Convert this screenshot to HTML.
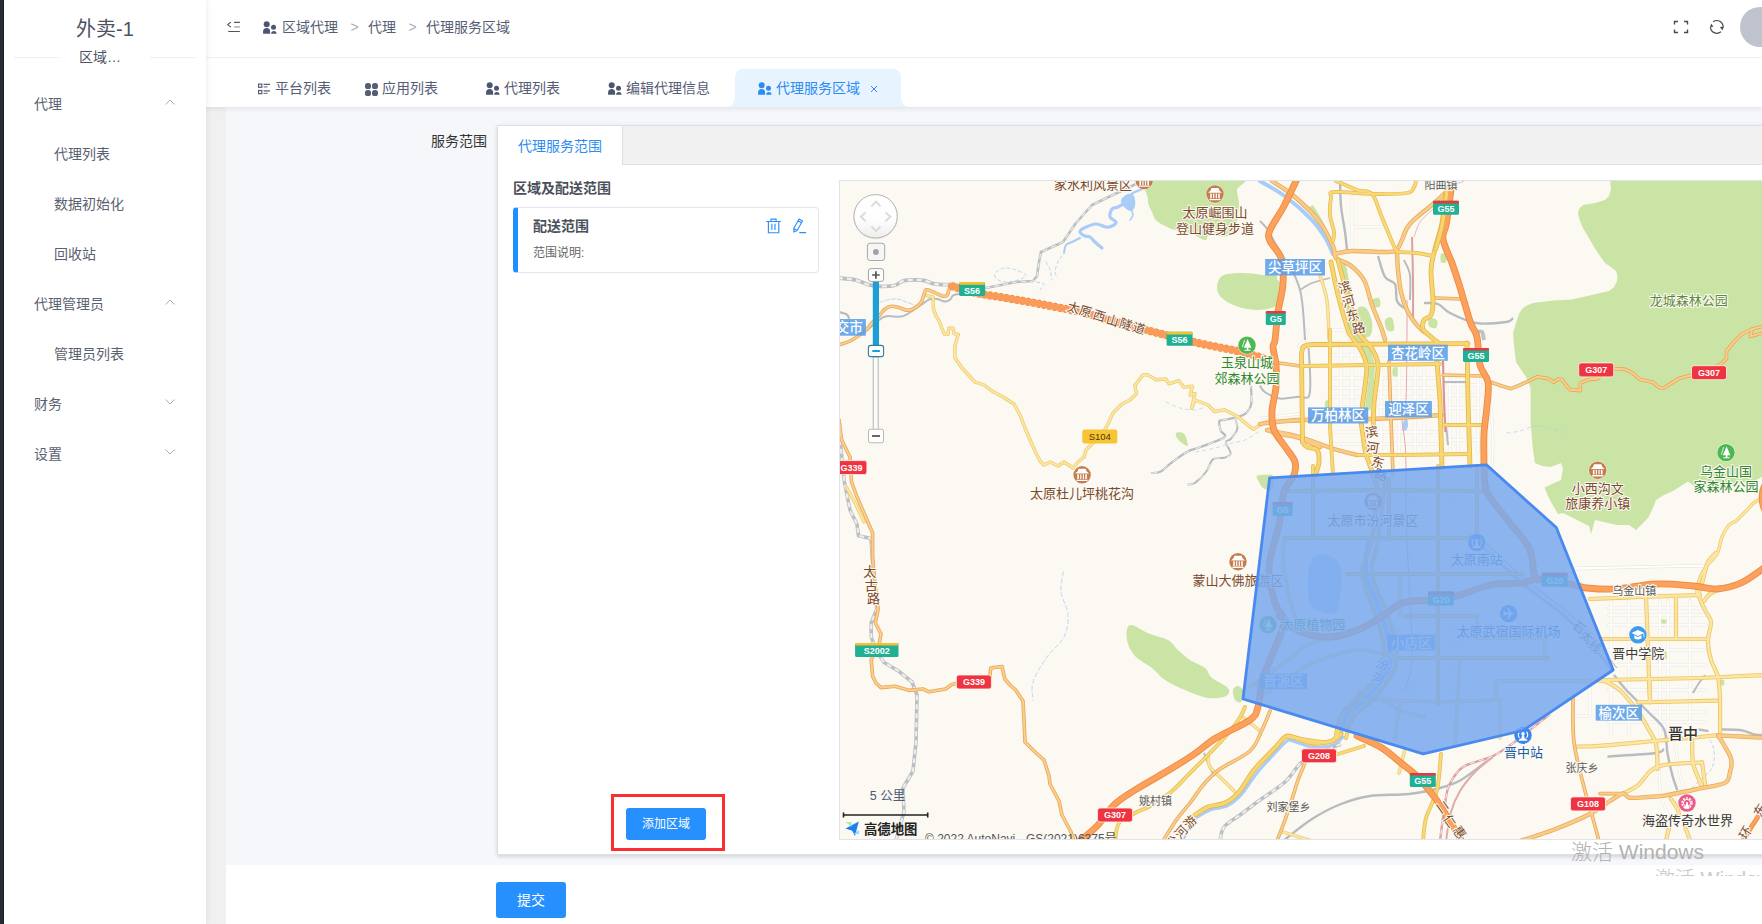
<!DOCTYPE html>
<html lang="zh-CN">
<head>
<meta charset="utf-8">
<title>代理服务区域</title>
<style>
*{box-sizing:border-box;margin:0;padding:0}
html,body{width:1762px;height:924px;overflow:hidden;background:#f5f7fa}
body{position:relative;font-family:"Liberation Sans","Noto Sans CJK SC",sans-serif;font-size:14px;color:#5a6070;-webkit-font-smoothing:antialiased}
.abs{position:absolute}
.t{position:absolute;white-space:nowrap;line-height:20px;height:20px}
#strip{left:0;top:0;width:4px;height:924px;background:linear-gradient(to right,#282c35 0,#282c35 2.7px,#1b1f28 3.5px,#1b1f28 4px)}
#side{left:4px;top:0;width:202px;height:924px;background:#fff;box-shadow:1px 0 6px rgba(0,21,41,.08);z-index:5}
#head{left:206px;top:0;width:1556px;height:58px;background:#fff;border-bottom:1px solid #f0f0f2;z-index:4}
#tabs{left:206px;top:58px;width:1556px;height:49px;background:#fff;box-shadow:0 2px 5px rgba(0,21,41,.08);z-index:3}
#gstrip{left:206px;top:107px;width:20px;height:817px;background:#f0f0f0}
#foot{left:226px;top:865px;width:1536px;height:59px;background:#fff}
#panel{left:497px;top:125px;width:1300px;height:730px;background:#fff;border:1px solid #dcdfe6;box-shadow:0 2px 4px 0 rgba(0,0,0,.12),0 0 6px 0 rgba(0,0,0,.04)}
#phead{left:0;top:0;width:1298px;height:39px;background:#f1f1f1;border-bottom:1px solid #e0e3ea}
#ptab{left:-1px;top:0;width:126px;height:39px;background:#fff;border-right:1px solid #dcdfe6;border-left:1px solid #dcdfe6}
.mi{color:#5b6171}
.btn{position:absolute;background:#2691fe;color:#fff;border-radius:3px;text-align:center}
</style>
</head>
<body>
<div id="strip" class="abs"></div>

<!-- SIDEBAR -->
<div id="side" class="abs">
  <div class="t" style="left:0;width:202px;top:15px;height:28px;line-height:28px;font-size:20px;text-align:center;color:#4c5262">外卖-1</div>
  <div class="abs" style="left:10px;top:57px;width:45px;height:1px;background:#f0f0f2"></div>
  <div class="abs" style="left:146px;top:57px;width:46px;height:1px;background:#f0f0f2"></div>
  <div class="t" style="left:0;width:192px;top:47px;text-align:center;color:#4c5262">区域…</div>

  <div class="t mi" style="left:30px;top:94px">代理</div>
  <svg class="abs" style="left:160px;top:98px" width="12" height="8" viewBox="0 0 12 8"><path d="M1.5 6.5 L6 2 L10.5 6.5" fill="none" stroke="#a9adb6" stroke-width="1"/></svg>
  <div class="t mi" style="left:50px;top:144px">代理列表</div>
  <div class="t mi" style="left:50px;top:194px">数据初始化</div>
  <div class="t mi" style="left:50px;top:244px">回收站</div>
  <div class="t mi" style="left:30px;top:294px">代理管理员</div>
  <svg class="abs" style="left:160px;top:298px" width="12" height="8" viewBox="0 0 12 8"><path d="M1.5 6.5 L6 2 L10.5 6.5" fill="none" stroke="#a9adb6" stroke-width="1"/></svg>
  <div class="t mi" style="left:50px;top:344px">管理员列表</div>
  <div class="t mi" style="left:30px;top:394px">财务</div>
  <svg class="abs" style="left:160px;top:398px" width="12" height="8" viewBox="0 0 12 8"><path d="M1.5 1.5 L6 6 L10.5 1.5" fill="none" stroke="#a9adb6" stroke-width="1"/></svg>
  <div class="t mi" style="left:30px;top:444px">设置</div>
  <svg class="abs" style="left:160px;top:448px" width="12" height="8" viewBox="0 0 12 8"><path d="M1.5 1.5 L6 6 L10.5 1.5" fill="none" stroke="#a9adb6" stroke-width="1"/></svg>
</div>

<!-- HEADER -->
<div id="head" class="abs">
  <svg class="abs" style="left:21px;top:20px" width="14" height="14" viewBox="0 0 14 14"><path d="M3.9 2.1 L0.7 4.6 L3.9 7.1 M7.1 2.3 H12.9 M1.2 11.5 H12.9" fill="none" stroke="#555" stroke-width="1.2"/><path d="M7.1 6.9 H12.9" fill="none" stroke="#aaa" stroke-width="1.4"/></svg>
  <svg class="abs usr" style="left:56px;top:20px" width="15" height="14" viewBox="0 0 15 14"><g fill="#4d5670"><circle cx="4.7" cy="4.25" r="3"/><path d="M1.1 13.7 V11.4 Q1.1 7.9 4.6 7.9 Q8.1 7.9 8.1 11.4 V13.7 Z"/><circle cx="11.5" cy="7.3" r="2.5"/><path d="M9.1 13.7 Q9.3 11.1 11.85 11.1 Q14.4 11.1 14.6 13.7 Z"/></g></svg>
  <div class="t" style="left:76px;top:17px;color:#555e73">区域代理</div>
  <div class="t" style="left:144.5px;top:17px;color:#a9aebb">&gt;</div>
  <div class="t" style="left:162px;top:17px;color:#555e73">代理</div>
  <div class="t" style="left:202.5px;top:17px;color:#a9aebb">&gt;</div>
  <div class="t" style="left:220px;top:17px;color:#555e73">代理服务区域</div>

  <svg class="abs" style="left:1467px;top:20px" width="16" height="14" viewBox="0 0 16 14"><path d="M1.5 4.5 V1.5 H5 M11 1.5 H14.5 V4.5 M14.5 9.5 V12.5 H11 M5 12.5 H1.5 V9.5" fill="none" stroke="#4a4a4a" stroke-width="1.4"/></svg>
  <svg class="abs" style="left:1503px;top:19px" width="16" height="16" viewBox="0 0 16 16"><path d="M4.2 2.7 A6.3 6.3 0 0 1 14.1 8 M11.9 12.7 A6.3 6.3 0 0 1 1.5 7.9" fill="none" stroke="#4a4a4a" stroke-width="1.2"/><path d="M10.8 8 L14.9 7.7 L13.5 11.2 Z M2.3 4.4 L1 7.9 L4.4 7.8 Z" fill="#4a4a4a"/></svg>
  <div class="abs" style="left:1534px;top:7px;width:40px;height:40px;border-radius:50%;background:#bfc3cd"></div>
</div>

<!-- TABS -->
<div id="tabs" class="abs">
  <svg class="abs" style="left:521px;top:11px" width="182" height="38" viewBox="0 0 182 38"><path d="M0 38 Q7 37.5 8 29 V9 Q8 0 17 0 H165 Q174 0 174 9 V29 Q175 37.5 182 38 Z" fill="#e7f3ff"/></svg>
  <svg class="abs" style="left:52px;top:24px" width="13" height="14" viewBox="0 0 13 14"><g fill="none" stroke="#555e73" stroke-width="1.2"><rect x="0.6" y="2.1" width="3.2" height="3.2"/><rect x="0.6" y="8.5" width="3.2" height="3.2"/><path d="M5.6 2.4 H12 M5.6 8.8 H12"/><path d="M5.6 4.9 H9.6 M5.6 11.3 H9.6" stroke="#7d8496"/></g></svg>
  <div class="t" style="left:69px;top:20px;color:#555e73">平台列表</div>
  <svg class="abs" style="left:158.6px;top:24.8px" width="13" height="13" viewBox="0 0 13 13"><g fill="#555e73"><rect x="0" y="0" width="6" height="6" rx="2.6"/><rect x="7" y="0" width="6" height="6" rx="2.6"/><rect x="0" y="7" width="6" height="6" rx="2.6"/><rect x="7" y="7" width="6" height="6" rx="2.6"/></g></svg>
  <div class="t" style="left:176px;top:20px;color:#555e73">应用列表</div>
  <svg class="abs usr" style="left:279px;top:23px" width="15" height="14" viewBox="0 0 15 14"><g fill="#4d5670"><circle cx="4.7" cy="4.25" r="3"/><path d="M1.1 13.7 V11.4 Q1.1 7.9 4.6 7.9 Q8.1 7.9 8.1 11.4 V13.7 Z"/><circle cx="11.5" cy="7.3" r="2.5"/><path d="M9.1 13.7 Q9.3 11.1 11.85 11.1 Q14.4 11.1 14.6 13.7 Z"/></g></svg>
  <div class="t" style="left:298px;top:20px;color:#555e73">代理列表</div>
  <svg class="abs usr" style="left:401px;top:23px" width="15" height="14" viewBox="0 0 15 14"><g fill="#4d5670"><circle cx="4.7" cy="4.25" r="3"/><path d="M1.1 13.7 V11.4 Q1.1 7.9 4.6 7.9 Q8.1 7.9 8.1 11.4 V13.7 Z"/><circle cx="11.5" cy="7.3" r="2.5"/><path d="M9.1 13.7 Q9.3 11.1 11.85 11.1 Q14.4 11.1 14.6 13.7 Z"/></g></svg>
  <div class="t" style="left:420px;top:20px;color:#555e73">编辑代理信息</div>
  <svg class="abs usr" style="left:551px;top:23px" width="15" height="14" viewBox="0 0 15 14"><g fill="#2d8cf0"><circle cx="4.7" cy="4.25" r="3"/><path d="M1.1 13.7 V11.4 Q1.1 7.9 4.6 7.9 Q8.1 7.9 8.1 11.4 V13.7 Z"/><circle cx="11.5" cy="7.3" r="2.5"/><path d="M9.1 13.7 Q9.3 11.1 11.85 11.1 Q14.4 11.1 14.6 13.7 Z"/></g></svg>
  <div class="t" style="left:570px;top:20px;color:#2d8cf0">代理服务区域</div>
  <svg class="abs" style="left:664px;top:27px" width="8" height="8" viewBox="0 0 8 8"><path d="M1 1 L7 7 M7 1 L1 7" stroke="#2d8cf0" stroke-width="1" fill="none"/></svg>
</div>

<div id="gstrip" class="abs"></div>
<div id="foot" class="abs"></div>

<!-- FORM -->
<div class="t" style="left:431px;top:131px;color:#333">服务范围</div>
<div id="panel" class="abs">
  <div id="phead" class="abs"><div id="ptab" class="abs"></div></div>
  <div class="t" style="left:20px;top:10px;color:#2d8cf0">代理服务范围</div>
  <div class="t" style="left:15px;top:52px;color:#4a4f59;font-weight:bold">区域及配送范围</div>
  <div class="abs" style="left:15px;top:81px;width:306px;height:66px;border:1px solid #e4e7ed;border-left:5px solid #1e8fff;border-radius:4px;background:#fff"></div>
  <div class="t" style="left:35px;top:90px;color:#4a4f59;font-weight:bold">配送范围</div>
  <div class="t" style="left:35px;top:117px;font-size:12px;color:#666">范围说明:</div>
  <svg class="abs" style="left:268px;top:92px" width="15" height="16" viewBox="0 0 15 16"><path d="M0.2 3.5 H14.9 M5 3.5 V1.1 H10.1 V3.5 M2.4 3.5 V14.7 H12.8 V3.5" fill="none" stroke="#2a90fc" stroke-width="1.15"/><path d="M5 5.8 h1.7 v6.2 h-1.7 z M8 5.8 h1.8 v6.2 h-1.8 z" fill="#74b6ff"/></svg>
  <svg class="abs" style="left:294px;top:92px" width="15" height="16" viewBox="0 0 15 16"><path d="M7.1 1 L10.5 3 L5.1 12.4 L1.9 14 L1.7 10.4 Z M6.1 2.7 L9.5 4.7 M1.7 10.4 L5.1 12.4 M7.3 14.6 H14.1" fill="none" stroke="#2a90fc" stroke-width="1.1" stroke-linejoin="round"/></svg>
  <div class="abs" style="left:113px;top:668px;width:114px;height:57px;border:3px solid #fa3030"></div>
  <div class="btn" style="left:128px;top:682px;width:80px;height:32px;line-height:32px;font-size:12px">添加区域</div>
  <!-- MAP -->
  <div id="map" class="abs" style="left:341px;top:54px;width:930px;height:660px;overflow:hidden;border:1px solid #dfe3ea;background:#fcf9f2">
  <!--MAPSVG-->
<svg width="930" height="658" viewBox="840 181 930 658" style="position:absolute;left:0;top:0;font-family:'Liberation Sans','Noto Sans CJK SC',sans-serif">
<rect x="840" y="181" width="930" height="658" fill="#fcf9f2"/>
<g><path d="M1610.0 178.0 L1611.0 189.0 L1609.0 196.0 L1605.0 200.0 L1595.0 203.0 L1583.0 205.0 L1579.0 209.0 L1578.0 214.0 L1580.0 221.0 L1583.0 228.0 L1590.0 240.0 L1596.0 250.0 L1600.0 256.0 L1605.0 263.0 L1611.0 267.0 L1616.0 271.0 L1617.5 276.0 L1617.0 281.0 L1614.0 287.0 L1609.0 291.0 L1596.0 294.0 L1583.0 297.0 L1572.0 299.6 L1554.0 300.5 L1533.0 303.0 L1526.0 306.0 L1522.0 309.0 L1519.0 314.0 L1517.0 320.0 L1513.0 333.0 L1514.0 346.0 L1516.0 362.0 L1526.0 377.0 L1530.6 388.0 L1530.6 423.0 L1533.0 450.0 L1535.0 463.0 L1542.0 466.0 L1550.0 467.0 L1556.0 465.0 L1561.0 463.0 L1563.0 469.0 L1561.0 480.0 L1552.0 484.0 L1544.5 487.5 L1548.0 496.0 L1551.0 502.0 L1558.0 514.0 L1563.0 513.0 L1589.0 526.0 L1591.0 534.0 L1595.0 520.0 L1617.0 525.0 L1629.0 525.0 L1636.0 530.0 L1648.0 518.0 L1653.0 508.0 L1656.0 500.0 L1664.0 495.0 L1673.0 491.0 L1688.0 481.6 L1695.0 487.0 L1720.0 487.0 L1756.0 480.0 L1775.0 470.0 L1775.0 178.0 Z" fill="#c9e4a5" stroke="none"/><path d="M1153.0 178.0 C1137.7 181.7 1148.2 194.3 1148.0 200.0 C1147.8 205.7 1150.5 208.5 1152.0 212.0 C1153.5 215.5 1153.7 218.2 1157.0 221.0 C1160.3 223.8 1166.5 227.0 1172.0 229.0 C1177.5 231.0 1185.3 231.5 1190.0 233.0 C1194.7 234.5 1197.3 236.8 1200.0 238.0 C1202.7 239.2 1204.3 240.5 1206.0 240.0 C1207.7 239.5 1206.3 235.7 1210.0 235.0 C1213.7 234.3 1223.7 237.5 1228.0 236.0 C1232.3 234.5 1234.2 231.2 1236.0 226.0 C1237.8 220.8 1238.8 211.0 1239.0 205.0 C1239.2 199.0 1236.8 194.5 1237.0 190.0 C1237.2 185.5 1254.0 180.0 1240.0 178.0 C1226.0 176.0 1168.3 174.3 1153.0 178.0 Z" fill="#c9e4a5" stroke="none"/><path d="M1222.0 276.0 C1218.2 278.5 1217.0 284.3 1217.0 288.0 C1217.0 291.7 1218.8 295.0 1222.0 298.0 C1225.2 301.0 1230.3 304.0 1236.0 306.0 C1241.7 308.0 1249.7 309.8 1256.0 310.0 C1262.3 310.2 1269.5 309.3 1274.0 307.0 C1278.5 304.7 1282.0 300.2 1283.0 296.0 C1284.0 291.8 1283.5 285.5 1280.0 282.0 C1276.5 278.5 1268.7 276.5 1262.0 275.0 C1255.3 273.5 1246.7 272.8 1240.0 273.0 C1233.3 273.2 1225.8 273.5 1222.0 276.0 Z" fill="#c9e4a5" stroke="none"/><path d="M1130.0 625.0 C1126.2 626.0 1126.2 634.8 1127.0 640.0 C1127.8 645.2 1130.8 651.3 1135.0 656.0 C1139.2 660.7 1147.0 664.0 1152.0 668.0 C1157.0 672.0 1159.5 676.3 1165.0 680.0 C1170.5 683.7 1177.8 687.0 1185.0 690.0 C1192.2 693.0 1201.2 697.0 1208.0 698.0 C1214.8 699.0 1222.7 697.7 1226.0 696.0 C1229.3 694.3 1230.3 691.0 1228.0 688.0 C1225.7 685.0 1215.8 681.3 1212.0 678.0 C1208.2 674.7 1208.7 671.0 1205.0 668.0 C1201.3 665.0 1194.5 663.0 1190.0 660.0 C1185.5 657.0 1181.7 653.3 1178.0 650.0 C1174.3 646.7 1172.7 642.7 1168.0 640.0 C1163.3 637.3 1156.3 636.5 1150.0 634.0 C1143.7 631.5 1133.8 624.0 1130.0 625.0 Z" fill="#c9e4a5" stroke="none"/><path d="M1233.0 690.0 C1233.5 687.7 1236.2 685.7 1238.0 686.0 C1239.8 686.3 1243.5 689.3 1244.0 692.0 C1244.5 694.7 1242.5 700.7 1241.0 702.0 C1239.5 703.3 1236.3 702.0 1235.0 700.0 C1233.7 698.0 1232.5 692.3 1233.0 690.0 Z" fill="#c9e4a5" stroke="none"/><path d="M1176.0 433.0 C1176.8 432.1 1180.3 431.9 1182.0 432.6 C1183.7 433.3 1185.1 434.8 1186.0 437.0 C1186.9 439.2 1188.3 445.0 1187.6 446.0 C1186.9 447.0 1183.8 444.3 1182.0 443.0 C1180.2 441.7 1178.0 439.7 1177.0 438.0 C1176.0 436.3 1175.2 433.9 1176.0 433.0 Z" fill="#c9e4a5" stroke="none"/><path d="M1260.0 275.0 L1277.0 275.0 L1278.0 300.0 L1272.0 308.0 L1260.0 308.0 Z" fill="#c9e4a5" stroke="none"/><path d="M1357.0 310.0 C1358.0 305.7 1363.5 306.0 1366.0 308.0 C1368.5 310.0 1371.3 317.3 1372.0 322.0 C1372.7 326.7 1372.0 334.0 1370.0 336.0 C1368.0 338.0 1362.2 338.3 1360.0 334.0 C1357.8 329.7 1356.0 314.3 1357.0 310.0 Z" fill="#c9e4a5" stroke="none"/><path d="M1372.0 300.0 C1372.8 298.5 1377.7 297.0 1379.0 298.0 C1380.3 299.0 1380.8 304.5 1380.0 306.0 C1379.2 307.5 1375.3 308.0 1374.0 307.0 C1372.7 306.0 1371.2 301.5 1372.0 300.0 Z" fill="#c9e4a5" stroke="none"/><path d="M1385.0 320.0 C1385.8 318.0 1390.5 316.3 1392.0 318.0 C1393.5 319.7 1394.8 328.0 1394.0 330.0 C1393.2 332.0 1388.5 331.7 1387.0 330.0 C1385.5 328.3 1384.2 322.0 1385.0 320.0 Z" fill="#c9e4a5" stroke="none"/><path d="M1429.0 318.0 C1430.3 317.0 1435.8 318.3 1437.0 320.0 C1438.2 321.7 1437.3 327.0 1436.0 328.0 C1434.7 329.0 1430.2 327.7 1429.0 326.0 C1427.8 324.3 1427.7 319.0 1429.0 318.0 Z" fill="#c9e4a5" stroke="none"/><path d="M1441.0 254.0 C1441.8 252.7 1445.2 252.7 1446.0 254.0 C1446.8 255.3 1446.8 260.7 1446.0 262.0 C1445.2 263.3 1441.8 263.3 1441.0 262.0 C1440.2 260.7 1440.2 255.3 1441.0 254.0 Z" fill="#c9e4a5" stroke="none"/><path d="M1257.0 476.0 C1258.2 474.8 1263.3 474.8 1266.0 474.8 C1268.7 474.8 1272.0 473.5 1273.0 476.0 C1274.0 478.5 1273.7 488.0 1272.0 490.0 C1270.3 492.0 1265.2 489.3 1263.0 488.0 C1260.8 486.7 1260.0 484.0 1259.0 482.0 C1258.0 480.0 1255.8 477.2 1257.0 476.0 Z" fill="#c9e4a5" stroke="none"/><path d="M1341.0 264.0 L1346.0 264.0 L1358.0 330.0 L1362.0 338.0 L1371.0 351.0 L1375.0 365.0 L1374.0 383.0 L1371.5 403.0 L1370.5 410.0 L1365.0 410.0 L1365.5 403.0 L1368.5 380.0 L1369.0 365.0 L1363.0 351.0 L1353.0 337.0 L1349.0 328.0 Z" fill="#c9e4a5" stroke="none"/><path d="M1393.0 368.0 C1393.8 366.7 1397.2 366.7 1398.0 368.0 C1398.8 369.3 1398.8 374.7 1398.0 376.0 C1397.2 377.3 1393.8 377.3 1393.0 376.0 C1392.2 374.7 1392.2 369.3 1393.0 368.0 Z" fill="#c9e4a5" stroke="none"/><path d="M1325.0 402.0 C1325.7 400.2 1329.0 398.7 1330.0 400.0 C1331.0 401.3 1331.7 408.2 1331.0 410.0 C1330.3 411.8 1327.0 412.3 1326.0 411.0 C1325.0 409.7 1324.3 403.8 1325.0 402.0 Z" fill="#c9e4a5" stroke="none"/><path d="M1660.0 620.0 C1661.0 619.0 1665.0 619.0 1666.0 620.0 C1667.0 621.0 1667.0 625.0 1666.0 626.0 C1665.0 627.0 1661.0 627.0 1660.0 626.0 C1659.0 625.0 1659.0 621.0 1660.0 620.0 Z" fill="#c9e4a5" stroke="none"/><path d="M1664.0 652.0 C1664.7 651.0 1667.3 651.0 1668.0 652.0 C1668.7 653.0 1668.7 657.0 1668.0 658.0 C1667.3 659.0 1664.7 659.0 1664.0 658.0 C1663.3 657.0 1663.3 653.0 1664.0 652.0 Z" fill="#c9e4a5" stroke="none"/><path d="M1720.0 680.0 C1720.7 679.2 1723.3 679.2 1724.0 680.0 C1724.7 680.8 1724.7 684.2 1724.0 685.0 C1723.3 685.8 1720.7 685.8 1720.0 685.0 C1719.3 684.2 1719.3 680.8 1720.0 680.0 Z" fill="#c9e4a5" stroke="none"/><path d="M1309.0 207.0 L1313.0 205.0 L1321.0 218.0 L1330.0 236.0 L1334.0 250.0 L1330.0 252.0 L1324.0 238.0 L1316.0 222.0 Z" fill="#c9e4a5" stroke="none"/></g>
<g fill="none" stroke-linecap="round" stroke-linejoin="round"><path d="M1148.0 186.0 C1146.7 186.7 1142.5 188.8 1140.0 190.0 C1137.5 191.2 1135.2 191.3 1133.0 193.0 C1130.8 194.7 1128.0 198.8 1127.0 200.0" stroke="#a9cdf8" stroke-width="2.4" fill="none"/><path d="M1128.0 194.0 C1130.2 193.3 1132.8 194.0 1134.0 196.0 C1135.2 198.0 1135.5 203.5 1135.0 206.0 C1134.5 208.5 1132.8 210.8 1131.0 211.0 C1129.2 211.2 1125.7 208.8 1124.0 207.0 C1122.3 205.2 1120.3 202.2 1121.0 200.0 C1121.7 197.8 1125.8 194.7 1128.0 194.0 Z" fill="#a9cdf8" stroke="none"/><path d="M1125.0 203.0 C1123.8 203.7 1120.2 206.0 1118.0 207.0 C1115.8 208.0 1113.3 207.3 1112.0 209.0 C1110.7 210.7 1109.3 214.8 1110.0 217.0 C1110.7 219.2 1115.7 220.5 1116.0 222.0 C1116.3 223.5 1113.7 225.2 1112.0 226.0 C1110.3 226.8 1108.7 227.3 1106.0 227.0 C1103.3 226.7 1099.7 223.8 1096.0 224.0 C1092.3 224.2 1086.7 226.7 1084.0 228.0 C1081.3 229.3 1079.8 230.7 1080.0 232.0 C1080.2 233.3 1083.3 235.2 1085.0 236.0 C1086.7 236.8 1088.2 235.8 1090.0 237.0 C1091.8 238.2 1094.0 241.2 1096.0 243.0 C1098.0 244.8 1101.0 247.2 1102.0 248.0" stroke="#a9cdf8" stroke-width="3.2" fill="none"/><path d="M1131.0 209.0 C1131.3 210.0 1133.2 213.2 1133.0 215.0 C1132.8 216.8 1130.5 219.2 1130.0 220.0" stroke="#a9cdf8" stroke-width="1.6" fill="none"/><path d="M1080.0 238.0 C1078.7 238.7 1074.3 240.8 1072.0 242.0 C1069.7 243.2 1067.3 243.2 1066.0 245.0 C1064.7 246.8 1064.3 251.7 1064.0 253.0" stroke="#a9cdf8" stroke-width="2.0" fill="none"/><path d="M1062.0 256.0 C1061.3 257.0 1059.2 259.3 1058.0 262.0 C1056.8 264.7 1055.0 269.3 1055.0 272.0 C1055.0 274.7 1057.5 277.0 1058.0 278.0" stroke="#a9cdf8" stroke-width="0.8" fill="none" stroke-dasharray="3 3"/><path d="M1046.0 262.0 C1046.7 263.3 1049.0 267.0 1050.0 270.0 C1051.0 273.0 1051.7 278.3 1052.0 280.0" stroke="#a9cdf8" stroke-width="0.8" fill="none" stroke-dasharray="3 3"/><path d="M1040.0 290.0 C1040.7 289.0 1044.7 285.3 1044.0 284.0 C1043.3 282.7 1037.3 282.3 1036.0 282.0" stroke="#a9cdf8" stroke-width="0.8" fill="none" stroke-dasharray="3 3"/><path d="M996.0 272.0 C997.3 271.3 1000.7 268.3 1004.0 268.0 C1007.3 267.7 1012.3 268.7 1016.0 270.0 C1019.7 271.3 1027.0 274.0 1026.0 276.0 C1025.0 278.0 1014.7 281.3 1010.0 282.0 C1005.3 282.7 1000.7 281.3 998.0 280.0 C995.3 278.7 994.7 275.0 994.0 274.0" stroke="#a9cdf8" stroke-width="0.8" fill="none" stroke-dasharray="3 3"/><path d="M1260.0 181.0 C1264.3 183.7 1277.3 190.5 1286.0 197.0 C1294.7 203.5 1305.3 213.0 1312.0 220.0 C1318.7 227.0 1322.5 233.3 1326.0 239.0 C1329.5 244.7 1331.8 251.5 1333.0 254.0" stroke="#a9cdf8" stroke-width="4.0" fill="none"/><path d="M879.6 302.4 C881.3 301.9 886.8 299.8 890.0 299.3 C893.2 298.8 895.7 298.8 898.6 299.3 C901.5 299.8 904.7 301.4 907.3 302.4 C909.9 303.3 913.1 304.6 914.2 305.0" stroke="#a9cdf8" stroke-width="0.8" fill="none" stroke-dasharray="4 2"/><path d="M1063.4 572.0 C1063.0 575.3 1060.2 584.9 1061.0 592.0 C1061.8 599.1 1067.5 607.0 1068.0 614.5 C1068.5 622.0 1067.5 629.9 1064.0 637.0 C1060.5 644.1 1052.2 649.5 1047.0 657.0 C1041.8 664.5 1035.3 674.8 1033.0 682.0 C1030.7 689.2 1033.0 697.0 1033.0 700.0" stroke="#a9cdf8" stroke-width="0.8" fill="none" stroke-dasharray="4 3"/><path d="M1507.0 433.0 C1509.2 432.7 1515.3 432.2 1520.0 431.0 C1524.7 429.8 1530.0 426.5 1535.0 426.0 C1540.0 425.5 1544.8 426.8 1550.0 428.0 C1555.2 429.2 1563.3 432.2 1566.0 433.0" stroke="#a9cdf8" stroke-width="0.7" fill="none" stroke-dasharray="3 4"/><path d="M1369.0 541.0 C1368.5 546.5 1363.8 561.5 1366.0 574.0 C1368.2 586.5 1378.2 604.7 1382.0 616.0 C1385.8 627.3 1387.8 633.3 1389.0 642.0 C1390.2 650.7 1392.2 659.3 1389.0 668.0 C1385.8 676.7 1377.0 686.0 1370.0 694.0 C1363.0 702.0 1352.0 709.0 1347.0 716.0 C1342.0 723.0 1341.2 732.7 1340.0 736.0" stroke="#a9cdf8" stroke-width="5.0" fill="none"/><path d="M1343.0 737.0 C1341.3 738.3 1338.2 743.3 1333.0 745.0 C1327.8 746.7 1318.7 747.7 1312.0 747.0 C1305.3 746.3 1297.2 742.0 1293.0 741.0 C1288.8 740.0 1289.8 739.2 1287.0 741.0 C1284.2 742.8 1281.0 746.7 1276.0 752.0 C1271.0 757.3 1262.8 765.8 1257.0 773.0 C1251.2 780.2 1246.0 789.5 1241.0 795.0 C1236.0 800.5 1232.2 803.5 1227.0 806.0 C1221.8 808.5 1215.2 808.0 1210.0 810.0 C1204.8 812.0 1198.3 816.7 1196.0 818.0" stroke="#a9cdf8" stroke-width="3.0" fill="none"/><path d="M1316.0 556.0 C1319.3 554.7 1326.0 554.3 1330.0 556.0 C1334.0 557.7 1338.2 560.3 1340.0 566.0 C1341.8 571.7 1341.7 582.3 1341.0 590.0 C1340.3 597.7 1339.2 608.3 1336.0 612.0 C1332.8 615.7 1326.3 613.3 1322.0 612.0 C1317.7 610.7 1312.3 609.3 1310.0 604.0 C1307.7 598.7 1308.0 586.7 1308.0 580.0 C1308.0 573.3 1308.7 568.0 1310.0 564.0 C1311.3 560.0 1312.7 557.3 1316.0 556.0 Z" fill="#b6d5fa" stroke="none"/><path d="M1196.0 822.0 C1194.7 823.3 1190.0 827.2 1188.0 830.0 C1186.0 832.8 1184.7 837.5 1184.0 839.0" stroke="#a9cdf8" stroke-width="2.0" fill="none"/><path d="M1707.0 735.0 C1708.2 737.5 1713.2 744.5 1714.0 750.0 C1714.8 755.5 1714.3 763.0 1712.0 768.0 C1709.7 773.0 1703.7 776.3 1700.0 780.0 C1696.3 783.7 1691.7 788.3 1690.0 790.0" stroke="#a9cdf8" stroke-width="0.8" fill="none" stroke-dasharray="3 3"/><path d="M1404.0 420.0 C1404.8 418.2 1406.3 418.0 1407.0 419.0 C1407.7 420.0 1408.3 423.8 1408.0 426.0 C1407.7 428.2 1406.0 431.3 1405.0 432.0 C1404.0 432.7 1402.2 432.0 1402.0 430.0 C1401.8 428.0 1403.2 421.8 1404.0 420.0 Z" fill="#a9cdf8" stroke="none"/><path d="M1166.0 402.0 C1168.3 403.0 1175.2 406.7 1180.0 408.0 C1184.8 409.3 1190.8 410.2 1195.0 410.0 C1199.2 409.8 1203.3 407.5 1205.0 407.0" stroke="#a9cdf8" stroke-width="0.7" fill="none" stroke-dasharray="3 4"/><path d="M1196.0 452.0 C1199.2 451.3 1209.0 449.5 1215.0 448.0 C1221.0 446.5 1227.0 444.3 1232.0 443.0 C1237.0 441.7 1240.7 441.8 1245.0 440.0 C1249.3 438.2 1255.8 433.3 1258.0 432.0" stroke="#a9cdf8" stroke-width="0.7" fill="none" stroke-dasharray="3 4"/></g>
<g fill="none" stroke-linecap="round" stroke-linejoin="round"><path d="M1333.0 355.0 L1362.0 355.0" stroke="#ebe8e1" stroke-width="2.8"/><path d="M1378.0 355.0 L1437.0 355.0" stroke="#ebe8e1" stroke-width="2.8"/><path d="M1333.0 378.0 L1362.0 378.0" stroke="#ebe8e1" stroke-width="2.8"/><path d="M1378.0 378.0 L1437.0 378.0" stroke="#ebe8e1" stroke-width="2.8"/><path d="M1333.0 388.0 L1362.0 388.0" stroke="#ebe8e1" stroke-width="2.8"/><path d="M1378.0 388.0 L1437.0 388.0" stroke="#ebe8e1" stroke-width="2.8"/><path d="M1333.0 397.0 L1362.0 397.0" stroke="#ebe8e1" stroke-width="2.8"/><path d="M1378.0 397.0 L1437.0 397.0" stroke="#ebe8e1" stroke-width="2.8"/><path d="M1333.0 407.0 L1362.0 407.0" stroke="#ebe8e1" stroke-width="2.8"/><path d="M1378.0 407.0 L1437.0 407.0" stroke="#ebe8e1" stroke-width="2.8"/><path d="M1333.0 432.0 L1362.0 432.0" stroke="#ebe8e1" stroke-width="2.8"/><path d="M1378.0 432.0 L1437.0 432.0" stroke="#ebe8e1" stroke-width="2.8"/><path d="M1333.0 444.0 L1362.0 444.0" stroke="#ebe8e1" stroke-width="2.8"/><path d="M1378.0 444.0 L1437.0 444.0" stroke="#ebe8e1" stroke-width="2.8"/><path d="M1446.0 385.0 L1482.0 385.0" stroke="#ebe8e1" stroke-width="2.8"/><path d="M1446.0 395.0 L1482.0 395.0" stroke="#ebe8e1" stroke-width="2.8"/><path d="M1446.0 408.0 L1482.0 408.0" stroke="#ebe8e1" stroke-width="2.8"/><path d="M1446.0 440.0 L1482.0 440.0" stroke="#ebe8e1" stroke-width="2.8"/><path d="M1341.0 347.0 L1341.0 418.0" stroke="#ebe8e1" stroke-width="2.8"/><path d="M1352.0 347.0 L1352.0 418.0" stroke="#ebe8e1" stroke-width="2.8"/><path d="M1381.0 366.0 L1381.0 453.0" stroke="#ebe8e1" stroke-width="2.8"/><path d="M1399.0 366.0 L1399.0 453.0" stroke="#ebe8e1" stroke-width="2.8"/><path d="M1415.0 366.0 L1415.0 453.0" stroke="#ebe8e1" stroke-width="2.8"/><path d="M1424.0 366.0 L1424.0 453.0" stroke="#ebe8e1" stroke-width="2.8"/><path d="M1450.0 378.0 L1450.0 452.0" stroke="#ebe8e1" stroke-width="2.8"/><path d="M1458.0 378.0 L1458.0 452.0" stroke="#ebe8e1" stroke-width="2.8"/><path d="M1478.0 378.0 L1478.0 452.0" stroke="#ebe8e1" stroke-width="2.8"/><path d="M1352.0 227.0 L1383.0 227.0" stroke="#ebe8e1" stroke-width="2.8"/><path d="M1352.0 197.0 L1352.0 250.0" stroke="#ebe8e1" stroke-width="2.8"/><path d="M1331.0 330.0 L1345.0 330.0 L1349.0 339.0" stroke="#ebe8e1" stroke-width="2.8"/><path d="M1298.0 347.0 L1306.0 338.0 L1308.0 330.0" stroke="#ebe8e1" stroke-width="2.8"/><path d="M1262.0 418.0 L1300.0 414.0" stroke="#ebe8e1" stroke-width="2.8"/><path d="M1608.0 608.0 L1706.0 608.0" stroke="#ebe8e1" stroke-width="2.8"/><path d="M1608.0 615.0 L1706.0 615.0" stroke="#ebe8e1" stroke-width="2.8"/><path d="M1608.0 625.0 L1706.0 625.0" stroke="#ebe8e1" stroke-width="2.8"/><path d="M1608.0 650.0 L1706.0 650.0" stroke="#ebe8e1" stroke-width="2.8"/><path d="M1608.0 665.0 L1706.0 665.0" stroke="#ebe8e1" stroke-width="2.8"/><path d="M1608.0 690.0 L1706.0 690.0" stroke="#ebe8e1" stroke-width="2.8"/><path d="M1608.0 712.0 L1706.0 712.0" stroke="#ebe8e1" stroke-width="2.8"/><path d="M1608.0 722.0 L1706.0 722.0" stroke="#ebe8e1" stroke-width="2.8"/><path d="M1611.0 600.0 L1611.0 735.0" stroke="#ebe8e1" stroke-width="2.8"/><path d="M1629.0 600.0 L1629.0 735.0" stroke="#ebe8e1" stroke-width="2.8"/><path d="M1660.0 600.0 L1660.0 735.0" stroke="#ebe8e1" stroke-width="2.8"/><path d="M1668.0 600.0 L1668.0 735.0" stroke="#ebe8e1" stroke-width="2.8"/><path d="M1690.0 600.0 L1690.0 735.0" stroke="#ebe8e1" stroke-width="2.8"/><path d="M1575.0 568.0 L1700.0 566.0" stroke="#ebe8e1" stroke-width="2.8"/><path d="M1590.0 680.0 L1590.0 716.0 L1575.0 716.0" stroke="#ebe8e1" stroke-width="2.8"/><path d="M1658.0 745.0 L1660.0 790.0 L1664.0 805.0 L1668.0 815.0" stroke="#ebe8e1" stroke-width="2.8"/><path d="M1675.0 745.0 L1680.0 775.0 L1684.0 790.0" stroke="#ebe8e1" stroke-width="2.8"/><path d="M1395.0 505.0 L1478.0 505.0" stroke="#ebe8e1" stroke-width="2.8"/><path d="M1395.0 520.0 L1478.0 520.0" stroke="#ebe8e1" stroke-width="2.8"/><path d="M1395.0 555.0 L1478.0 555.0" stroke="#ebe8e1" stroke-width="2.8"/><path d="M1395.0 590.0 L1478.0 590.0" stroke="#ebe8e1" stroke-width="2.8"/><path d="M1395.0 630.0 L1478.0 630.0" stroke="#ebe8e1" stroke-width="2.8"/><path d="M1395.0 645.0 L1478.0 645.0" stroke="#ebe8e1" stroke-width="2.8"/><path d="M1395.0 670.0 L1478.0 670.0" stroke="#ebe8e1" stroke-width="2.8"/><path d="M1395.0 690.0 L1478.0 690.0" stroke="#ebe8e1" stroke-width="2.8"/><path d="M1410.0 480.0 L1410.0 700.0" stroke="#ebe8e1" stroke-width="2.8"/><path d="M1424.0 480.0 L1424.0 700.0" stroke="#ebe8e1" stroke-width="2.8"/><path d="M1452.0 480.0 L1452.0 700.0" stroke="#ebe8e1" stroke-width="2.8"/><path d="M1465.0 480.0 L1465.0 700.0" stroke="#ebe8e1" stroke-width="2.8"/><path d="M1577.0 569.0 L1640.0 567.0 L1703.0 565.5 L1705.0 568.0" stroke="#ebe8e1" stroke-width="2.8"/><path d="M1490.0 395.0 L1492.0 420.0 L1493.0 445.0 L1492.0 467.0" stroke="#ebe8e1" stroke-width="2.8"/></g>
<g fill="none" stroke-linecap="round" stroke-linejoin="round"><path d="M1333.0 355.0 L1362.0 355.0" stroke="#ffffff" stroke-width="1.6"/><path d="M1378.0 355.0 L1437.0 355.0" stroke="#ffffff" stroke-width="1.6"/><path d="M1333.0 378.0 L1362.0 378.0" stroke="#ffffff" stroke-width="1.6"/><path d="M1378.0 378.0 L1437.0 378.0" stroke="#ffffff" stroke-width="1.6"/><path d="M1333.0 388.0 L1362.0 388.0" stroke="#ffffff" stroke-width="1.6"/><path d="M1378.0 388.0 L1437.0 388.0" stroke="#ffffff" stroke-width="1.6"/><path d="M1333.0 397.0 L1362.0 397.0" stroke="#ffffff" stroke-width="1.6"/><path d="M1378.0 397.0 L1437.0 397.0" stroke="#ffffff" stroke-width="1.6"/><path d="M1333.0 407.0 L1362.0 407.0" stroke="#ffffff" stroke-width="1.6"/><path d="M1378.0 407.0 L1437.0 407.0" stroke="#ffffff" stroke-width="1.6"/><path d="M1333.0 432.0 L1362.0 432.0" stroke="#ffffff" stroke-width="1.6"/><path d="M1378.0 432.0 L1437.0 432.0" stroke="#ffffff" stroke-width="1.6"/><path d="M1333.0 444.0 L1362.0 444.0" stroke="#ffffff" stroke-width="1.6"/><path d="M1378.0 444.0 L1437.0 444.0" stroke="#ffffff" stroke-width="1.6"/><path d="M1446.0 385.0 L1482.0 385.0" stroke="#ffffff" stroke-width="1.6"/><path d="M1446.0 395.0 L1482.0 395.0" stroke="#ffffff" stroke-width="1.6"/><path d="M1446.0 408.0 L1482.0 408.0" stroke="#ffffff" stroke-width="1.6"/><path d="M1446.0 440.0 L1482.0 440.0" stroke="#ffffff" stroke-width="1.6"/><path d="M1341.0 347.0 L1341.0 418.0" stroke="#ffffff" stroke-width="1.6"/><path d="M1352.0 347.0 L1352.0 418.0" stroke="#ffffff" stroke-width="1.6"/><path d="M1381.0 366.0 L1381.0 453.0" stroke="#ffffff" stroke-width="1.6"/><path d="M1399.0 366.0 L1399.0 453.0" stroke="#ffffff" stroke-width="1.6"/><path d="M1415.0 366.0 L1415.0 453.0" stroke="#ffffff" stroke-width="1.6"/><path d="M1424.0 366.0 L1424.0 453.0" stroke="#ffffff" stroke-width="1.6"/><path d="M1450.0 378.0 L1450.0 452.0" stroke="#ffffff" stroke-width="1.6"/><path d="M1458.0 378.0 L1458.0 452.0" stroke="#ffffff" stroke-width="1.6"/><path d="M1478.0 378.0 L1478.0 452.0" stroke="#ffffff" stroke-width="1.6"/><path d="M1352.0 227.0 L1383.0 227.0" stroke="#ffffff" stroke-width="1.6"/><path d="M1352.0 197.0 L1352.0 250.0" stroke="#ffffff" stroke-width="1.6"/><path d="M1331.0 330.0 L1345.0 330.0 L1349.0 339.0" stroke="#ffffff" stroke-width="1.6"/><path d="M1298.0 347.0 L1306.0 338.0 L1308.0 330.0" stroke="#ffffff" stroke-width="1.6"/><path d="M1262.0 418.0 L1300.0 414.0" stroke="#ffffff" stroke-width="1.6"/><path d="M1608.0 608.0 L1706.0 608.0" stroke="#ffffff" stroke-width="1.6"/><path d="M1608.0 615.0 L1706.0 615.0" stroke="#ffffff" stroke-width="1.6"/><path d="M1608.0 625.0 L1706.0 625.0" stroke="#ffffff" stroke-width="1.6"/><path d="M1608.0 650.0 L1706.0 650.0" stroke="#ffffff" stroke-width="1.6"/><path d="M1608.0 665.0 L1706.0 665.0" stroke="#ffffff" stroke-width="1.6"/><path d="M1608.0 690.0 L1706.0 690.0" stroke="#ffffff" stroke-width="1.6"/><path d="M1608.0 712.0 L1706.0 712.0" stroke="#ffffff" stroke-width="1.6"/><path d="M1608.0 722.0 L1706.0 722.0" stroke="#ffffff" stroke-width="1.6"/><path d="M1611.0 600.0 L1611.0 735.0" stroke="#ffffff" stroke-width="1.6"/><path d="M1629.0 600.0 L1629.0 735.0" stroke="#ffffff" stroke-width="1.6"/><path d="M1660.0 600.0 L1660.0 735.0" stroke="#ffffff" stroke-width="1.6"/><path d="M1668.0 600.0 L1668.0 735.0" stroke="#ffffff" stroke-width="1.6"/><path d="M1690.0 600.0 L1690.0 735.0" stroke="#ffffff" stroke-width="1.6"/><path d="M1575.0 568.0 L1700.0 566.0" stroke="#ffffff" stroke-width="1.6"/><path d="M1590.0 680.0 L1590.0 716.0 L1575.0 716.0" stroke="#ffffff" stroke-width="1.6"/><path d="M1658.0 745.0 L1660.0 790.0 L1664.0 805.0 L1668.0 815.0" stroke="#ffffff" stroke-width="1.6"/><path d="M1675.0 745.0 L1680.0 775.0 L1684.0 790.0" stroke="#ffffff" stroke-width="1.6"/><path d="M1395.0 505.0 L1478.0 505.0" stroke="#ffffff" stroke-width="1.6"/><path d="M1395.0 520.0 L1478.0 520.0" stroke="#ffffff" stroke-width="1.6"/><path d="M1395.0 555.0 L1478.0 555.0" stroke="#ffffff" stroke-width="1.6"/><path d="M1395.0 590.0 L1478.0 590.0" stroke="#ffffff" stroke-width="1.6"/><path d="M1395.0 630.0 L1478.0 630.0" stroke="#ffffff" stroke-width="1.6"/><path d="M1395.0 645.0 L1478.0 645.0" stroke="#ffffff" stroke-width="1.6"/><path d="M1395.0 670.0 L1478.0 670.0" stroke="#ffffff" stroke-width="1.6"/><path d="M1395.0 690.0 L1478.0 690.0" stroke="#ffffff" stroke-width="1.6"/><path d="M1410.0 480.0 L1410.0 700.0" stroke="#ffffff" stroke-width="1.6"/><path d="M1424.0 480.0 L1424.0 700.0" stroke="#ffffff" stroke-width="1.6"/><path d="M1452.0 480.0 L1452.0 700.0" stroke="#ffffff" stroke-width="1.6"/><path d="M1465.0 480.0 L1465.0 700.0" stroke="#ffffff" stroke-width="1.6"/><path d="M1577.0 569.0 L1640.0 567.0 L1703.0 565.5 L1705.0 568.0" stroke="#ffffff" stroke-width="1.6"/><path d="M1490.0 395.0 L1492.0 420.0 L1493.0 445.0 L1492.0 467.0" stroke="#ffffff" stroke-width="1.6"/></g>
<g fill="none" stroke-linecap="butt" stroke-linejoin="round"><path d="M838.0 278.0 C840.9 278.3 850.2 278.8 855.3 279.9 C860.3 281.0 864.2 283.5 868.3 284.6 C872.3 285.7 875.3 286.2 879.6 286.3 C883.9 286.4 890.3 286.4 894.3 285.5 C898.3 284.6 900.2 281.6 903.8 280.7 C907.4 279.8 912.4 279.9 915.9 279.9 C919.4 279.9 921.7 280.1 924.6 280.7 C927.5 281.3 930.3 283.0 933.2 283.7 C936.1 284.4 937.9 284.5 941.9 284.6 C945.9 284.8 954.9 284.6 957.5 284.6" stroke="#bcbfc2" stroke-width="3.8"/><path d="M838.0 278.0 C840.9 278.3 850.2 278.8 855.3 279.9 C860.3 281.0 864.2 283.5 868.3 284.6 C872.3 285.7 875.3 286.2 879.6 286.3 C883.9 286.4 890.3 286.4 894.3 285.5 C898.3 284.6 900.2 281.6 903.8 280.7 C907.4 279.8 912.4 279.9 915.9 279.9 C919.4 279.9 921.7 280.1 924.6 280.7 C927.5 281.3 930.3 283.0 933.2 283.7 C936.1 284.4 937.9 284.5 941.9 284.6 C945.9 284.8 954.9 284.6 957.5 284.6" stroke="#efeeec" stroke-width="2.3" stroke-dasharray="5 4"/><path d="M840.0 440.0 L844.4 482.0 L850.0 510.0 L857.0 524.4 L858.5 535.7 L871.0 538.5 L872.6 561.0 L875.0 590.0 L876.8 609.0 L871.2 623.0 L871.2 637.0 L876.0 650.0 L883.8 662.3 L898.0 670.7 L912.0 682.0 L917.0 695.0 L916.0 742.0 L913.0 771.0 L903.0 788.0 L904.0 812.0 L896.0 840.0" stroke="#bcbfc2" stroke-width="3.6"/><path d="M840.0 440.0 L844.4 482.0 L850.0 510.0 L857.0 524.4 L858.5 535.7 L871.0 538.5 L872.6 561.0 L875.0 590.0 L876.8 609.0 L871.2 623.0 L871.2 637.0 L876.0 650.0 L883.8 662.3 L898.0 670.7 L912.0 682.0 L917.0 695.0 L916.0 742.0 L913.0 771.0 L903.0 788.0 L904.0 812.0 L896.0 840.0" stroke="#efeeec" stroke-width="2.1" stroke-dasharray="5 4"/><path d="M1341.0 744.0 C1337.5 745.5 1326.7 749.8 1320.0 753.0 C1313.3 756.2 1306.8 758.2 1301.0 763.0 C1295.2 767.8 1291.8 775.8 1285.0 782.0 C1278.2 788.2 1267.5 794.5 1260.0 800.0 C1252.5 805.5 1246.0 810.5 1240.0 815.0 C1234.0 819.5 1227.3 822.7 1224.0 827.0 C1220.7 831.3 1220.7 838.7 1220.0 841.0" stroke="#bcbfc2" stroke-width="3.6"/><path d="M1341.0 744.0 C1337.5 745.5 1326.7 749.8 1320.0 753.0 C1313.3 756.2 1306.8 758.2 1301.0 763.0 C1295.2 767.8 1291.8 775.8 1285.0 782.0 C1278.2 788.2 1267.5 794.5 1260.0 800.0 C1252.5 805.5 1246.0 810.5 1240.0 815.0 C1234.0 819.5 1227.3 822.7 1224.0 827.0 C1220.7 831.3 1220.7 838.7 1220.0 841.0" stroke="#efeeec" stroke-width="2.1" stroke-dasharray="5 4"/><path d="M959.0 294.0 L986.0 288.0 L1016.0 282.0 L1033.0 281.0 L1037.0 276.0 L1039.0 262.0 L1041.0 252.0 L1063.0 242.0 L1076.0 223.0 L1092.0 205.0 L1121.0 191.0 L1136.0 184.0" stroke="#bcbfc2" stroke-width="2.6"/><path d="M959.0 294.0 L986.0 288.0 L1016.0 282.0 L1033.0 281.0 L1037.0 276.0 L1039.0 262.0 L1041.0 252.0 L1063.0 242.0 L1076.0 223.0 L1092.0 205.0 L1121.0 191.0 L1136.0 184.0" stroke="#efeeec" stroke-width="1.1" stroke-dasharray="5 4"/><path d="M866.0 331.0 C868.3 329.1 876.2 322.2 879.6 319.7 C883.0 317.2 883.0 316.7 886.5 316.2 C890.0 315.7 896.8 317.0 900.3 316.6 C903.8 316.2 903.2 316.5 907.3 314.1 C911.3 311.7 920.9 304.9 924.6 302.4 C928.4 299.9 927.6 299.9 929.8 299.3 C932.0 298.7 935.1 298.5 937.6 298.9 C940.1 299.3 942.5 301.4 944.5 301.5 C946.5 301.6 948.2 300.8 949.7 299.8 C951.2 298.8 951.6 296.4 953.2 295.4 C954.8 294.4 958.2 294.0 959.2 293.7" stroke="#b7bcc1" stroke-width="2.0"/><path d="M839.0 312.0 C840.3 312.4 845.0 313.4 846.7 314.5 C848.4 315.6 848.9 318.1 849.3 318.8" stroke="#b7bcc1" stroke-width="2.2"/><path d="M1151.0 473.2 C1152.7 472.9 1157.6 473.1 1160.9 471.5 C1164.2 469.9 1166.3 466.6 1170.6 463.4 C1174.9 460.1 1181.9 454.7 1186.8 452.0 C1191.7 449.3 1193.6 449.6 1199.8 447.2 C1206.0 444.8 1220.7 440.1 1224.2 437.4 C1227.7 434.7 1221.7 433.6 1220.9 430.9 C1220.1 428.2 1218.5 423.1 1219.3 421.2 C1220.1 419.3 1221.7 420.7 1225.8 419.6 C1229.9 418.5 1239.5 417.1 1243.7 414.7 C1247.9 412.3 1249.8 409.9 1251.0 405.0 C1252.2 400.1 1251.0 388.8 1251.0 385.5" stroke="#b7bcc1" stroke-width="2.2"/><path d="M1187.6 484.5 C1188.8 484.2 1191.9 485.1 1195.0 482.9 C1198.1 480.7 1203.3 475.4 1206.3 471.5 C1209.3 467.6 1209.8 461.7 1212.8 459.4 C1215.8 457.1 1221.2 458.6 1224.2 457.7 C1227.2 456.8 1230.4 456.3 1230.7 453.7 C1231.0 451.1 1225.8 444.8 1225.8 442.3 C1225.8 439.9 1228.8 441.2 1230.7 439.0 C1232.6 436.8 1236.4 432.5 1237.2 429.3 C1238.0 426.1 1235.9 421.2 1235.6 419.6" stroke="#b7bcc1" stroke-width="2.0"/><path d="M1259.9 385.5 C1260.7 386.6 1261.5 389.8 1264.8 392.0 C1268.0 394.2 1273.7 397.7 1279.4 398.5 C1285.1 399.3 1294.0 397.1 1298.9 396.8 C1303.8 396.5 1306.7 399.5 1308.6 396.8 C1310.5 394.1 1310.3 388.7 1310.3 380.6 C1310.3 372.5 1308.9 353.4 1308.6 348.0" stroke="#b7bcc1" stroke-width="2.0"/><path d="M1260.0 221.0 C1261.3 222.5 1265.5 226.3 1268.0 230.0 C1270.5 233.7 1272.3 238.3 1275.0 243.0 C1277.7 247.7 1281.2 253.5 1284.0 258.0 C1286.8 262.5 1289.3 264.7 1292.0 270.0 C1294.7 275.3 1298.2 283.3 1300.0 290.0 C1301.8 296.7 1302.2 301.7 1303.0 310.0 C1303.8 318.3 1304.7 335.0 1305.0 340.0" stroke="#b7bcc1" stroke-width="2.0"/><path d="M1300.0 290.0 C1302.0 288.8 1307.0 285.0 1312.0 283.0 C1317.0 281.0 1327.0 278.8 1330.0 278.0" stroke="#b7bcc1" stroke-width="1.6"/><path d="M1340.0 181.0 C1340.2 185.2 1340.2 197.5 1341.0 206.0 C1341.8 214.5 1344.0 224.7 1345.0 232.0 C1346.0 239.3 1346.7 247.0 1347.0 250.0" stroke="#b7bcc1" stroke-width="2.4"/><path d="M1378.0 256.0 C1379.2 259.5 1382.2 272.3 1385.0 277.0 C1387.8 281.7 1393.0 280.0 1395.0 284.0 C1397.0 288.0 1395.5 297.0 1397.0 301.0 C1398.5 305.0 1402.8 306.8 1404.0 308.0" stroke="#b7bcc1" stroke-width="2.4"/><path d="M1404.0 260.0 C1405.0 262.5 1409.0 268.3 1410.0 275.0 C1411.0 281.7 1410.0 295.8 1410.0 300.0" stroke="#b7bcc1" stroke-width="2.0"/><path d="M1424.0 303.0 C1426.3 303.2 1433.7 302.3 1438.0 304.0 C1442.3 305.7 1443.7 309.8 1450.0 313.0 C1456.3 316.2 1466.7 321.5 1476.0 323.0 C1485.3 324.5 1499.8 322.8 1506.0 322.0 C1512.2 321.2 1511.8 318.7 1513.0 318.0" stroke="#b7bcc1" stroke-width="2.4"/><path d="M1444.0 382.0 L1470.0 382.0" stroke="#b7bcc1" stroke-width="2.0"/><path d="M1446.0 425.0 L1448.0 445.0" stroke="#b7bcc1" stroke-width="2.0"/><path d="M1476.0 332.0 C1477.0 332.0 1480.7 330.7 1482.0 332.0 C1483.3 333.3 1483.7 338.7 1484.0 340.0" stroke="#bfc3c7" stroke-width="4.0"/><path d="M1283.0 841.0 C1287.8 837.3 1302.3 825.2 1312.0 819.0 C1321.7 812.8 1331.3 807.8 1341.0 804.0 C1350.7 800.2 1358.7 797.7 1370.0 796.0 C1381.3 794.3 1397.3 795.3 1409.0 794.0 C1420.7 792.7 1431.3 790.3 1440.0 788.0 C1448.7 785.7 1453.2 784.5 1461.0 780.0 C1468.8 775.5 1482.7 764.2 1487.0 761.0" stroke="#b7bcc1" stroke-width="2.4"/><path d="M1470.0 535.0 C1478.7 543.0 1505.2 568.5 1522.0 583.0 C1538.8 597.5 1555.8 607.3 1571.0 622.0 C1586.2 636.7 1606.0 662.8 1613.0 671.0" stroke="#c2c6ca" stroke-width="3.0"/><path d="M1474.0 532.0 C1482.7 540.0 1509.2 565.5 1526.0 580.0 C1542.8 594.5 1559.8 604.3 1575.0 619.0 C1590.2 633.7 1610.0 659.8 1617.0 668.0" stroke="#c2c6ca" stroke-width="1.2"/><path d="M1614.0 675.0 C1616.0 677.5 1620.4 683.7 1626.3 690.0 C1632.2 696.3 1643.0 706.4 1649.3 713.0 C1655.6 719.6 1661.1 722.9 1664.1 729.5 C1667.1 736.1 1666.0 744.8 1667.4 752.5 C1668.8 760.2 1670.8 769.2 1672.4 775.5 C1674.1 781.8 1676.5 787.8 1677.3 790.3" stroke="#b7bcc1" stroke-width="2.4"/><path d="M1693.0 693.0 C1694.0 691.3 1697.0 686.0 1699.0 683.0 C1701.0 680.0 1704.0 676.3 1705.0 675.0" stroke="#b7bcc1" stroke-width="2.0"/><path d="M1698.7 729.5 L1708.6 731.1" stroke="#b7bcc1" stroke-width="2.4"/><path d="M1721.7 729.5 C1725.0 729.6 1735.9 729.5 1741.4 730.3 C1746.9 731.1 1750.8 733.6 1754.6 734.4 C1758.4 735.2 1762.4 734.9 1764.0 735.0" stroke="#b7bcc1" stroke-width="2.4"/><path d="M1607.4 756.6 C1615.2 756.0 1644.8 754.5 1654.3 753.3 C1663.8 752.1 1662.5 749.9 1664.1 749.2" stroke="#b7bcc1" stroke-width="2.4"/><path d="M1204.0 753.0 C1204.7 754.7 1206.3 759.2 1208.0 763.0 C1209.7 766.8 1213.0 773.8 1214.0 776.0" stroke="#b7bcc1" stroke-width="2.0"/><path d="M1412.0 237.0 C1412.2 244.2 1412.8 266.3 1413.0 280.0 C1413.2 293.7 1413.0 312.5 1413.0 319.0" stroke="#dba0a0" stroke-width="2.0"/><path d="M1407.0 300.0 C1407.0 305.0 1407.2 313.5 1407.0 330.0 C1406.8 346.5 1406.8 384.5 1406.0 399.0 C1405.2 413.5 1402.2 409.7 1402.0 417.0 C1401.8 424.3 1404.3 434.3 1405.0 443.0 C1405.7 451.7 1405.8 456.2 1406.0 469.0 C1406.2 481.8 1405.3 498.2 1406.0 520.0 C1406.7 541.8 1409.0 576.7 1410.0 600.0 C1411.0 623.3 1412.8 645.0 1412.0 660.0 C1411.2 675.0 1406.2 685.0 1405.0 690.0" stroke="#e5a5ae" stroke-width="1.0"/><path d="M1443.0 361.0 C1443.2 367.5 1443.6 388.2 1444.0 400.0 C1444.4 411.8 1445.2 426.7 1445.5 432.0" stroke="#dd9298" stroke-width="2.2"/><path d="M1550.0 714.0 C1544.3 718.5 1525.5 734.0 1516.0 741.0 C1506.5 748.0 1501.8 751.7 1493.0 756.0 C1484.2 760.3 1470.2 762.2 1463.0 767.0 C1455.8 771.8 1452.4 778.8 1449.5 784.5 C1446.6 790.2 1447.0 791.6 1445.4 801.0 C1443.8 810.4 1440.9 834.3 1440.0 841.0" stroke="#dda0a0" stroke-width="2.4"/><path d="M1493.0 757.0 C1490.0 759.5 1480.5 766.3 1475.0 772.0 C1469.5 777.7 1464.0 784.3 1460.0 791.0 C1456.0 797.7 1453.3 803.7 1451.0 812.0 C1448.7 820.3 1446.8 836.2 1446.0 841.0" stroke="#e2aaaa" stroke-width="2.0"/><path d="M1550.0 714.0 C1544.3 718.5 1525.5 734.0 1516.0 741.0 C1506.5 748.0 1501.8 751.7 1493.0 756.0 C1484.2 760.3 1470.2 762.2 1463.0 767.0 C1455.8 771.8 1452.4 778.8 1449.5 784.5 C1446.6 790.2 1447.0 791.6 1445.4 801.0 C1443.8 810.4 1440.9 834.3 1440.0 841.0" stroke="#fbf3f0" stroke-width="1.0" stroke-dasharray="5 4"/><path d="M1444.0 181.0 C1445.3 181.7 1448.7 185.0 1452.0 185.0 C1455.3 185.0 1462.0 181.7 1464.0 181.0" stroke="#e8b8b8" stroke-width="1.0"/><path d="M1414.0 237.0 C1415.0 234.5 1417.0 226.5 1420.0 222.0 C1423.0 217.5 1428.0 214.0 1432.0 210.0 C1436.0 206.0 1442.0 200.0 1444.0 198.0" stroke="#e8b8b8" stroke-width="1.0"/><path d="M1151.0 473.2 C1152.7 472.9 1157.6 473.1 1160.9 471.5 C1164.2 469.9 1166.3 466.6 1170.6 463.4 C1174.9 460.1 1181.9 454.7 1186.8 452.0 C1191.7 449.3 1193.6 449.6 1199.8 447.2 C1206.0 444.8 1220.7 440.1 1224.2 437.4 C1227.7 434.7 1221.7 433.6 1220.9 430.9 C1220.1 428.2 1218.5 423.1 1219.3 421.2 C1220.1 419.3 1221.7 420.7 1225.8 419.6 C1229.9 418.5 1239.5 417.1 1243.7 414.7 C1247.9 412.3 1249.8 409.9 1251.0 405.0 C1252.2 400.1 1251.0 388.8 1251.0 385.5" stroke="#f4f2ee" stroke-width="1.0" stroke-dasharray="6 7"/><path d="M1187.6 484.5 C1188.8 484.2 1191.9 485.1 1195.0 482.9 C1198.1 480.7 1203.3 475.4 1206.3 471.5 C1209.3 467.6 1209.8 461.7 1212.8 459.4 C1215.8 457.1 1221.2 458.6 1224.2 457.7 C1227.2 456.8 1230.4 456.3 1230.7 453.7 C1231.0 451.1 1225.8 444.8 1225.8 442.3 C1225.8 439.9 1228.8 441.2 1230.7 439.0 C1232.6 436.8 1236.4 432.5 1237.2 429.3 C1238.0 426.1 1235.9 421.2 1235.6 419.6" stroke="#f4f2ee" stroke-width="0.9" stroke-dasharray="6 7"/></g>
<g fill="none" stroke-linecap="round" stroke-linejoin="round"><path d="M847.0 488.0 L856.0 505.0 L864.0 522.0" stroke="#ecc96c" stroke-width="3.4"/><path d="M1320.0 275.0 C1321.2 279.3 1325.5 290.3 1327.0 301.0 C1328.5 311.7 1328.7 332.7 1329.0 339.0" stroke="#ecc96c" stroke-width="3.4"/><path d="M1243.0 717.0 L1260.0 731.0" stroke="#ecc96c" stroke-width="3.4"/><path d="M1208.0 757.0 C1208.3 758.7 1207.7 763.3 1210.0 767.0 C1212.3 770.7 1217.8 774.8 1222.0 779.0 C1226.2 783.2 1232.8 789.8 1235.0 792.0" stroke="#ecc96c" stroke-width="3.4"/><path d="M1405.0 749.0 L1399.0 773.0" stroke="#ecc96c" stroke-width="3.4"/><path d="M1283.0 832.0 L1312.0 841.0" stroke="#ecc96c" stroke-width="3.4"/><path d="M1590.0 599.0 C1598.3 598.7 1621.7 597.7 1640.0 597.0 C1658.3 596.3 1690.0 595.3 1700.0 595.0" stroke="#eec65c" stroke-width="4.2"/><path d="M1704.0 601.0 C1705.0 599.8 1707.0 596.2 1710.0 594.0 C1713.0 591.8 1717.8 589.7 1722.0 588.0 C1726.2 586.3 1732.8 584.7 1735.0 584.0" stroke="#eec65c" stroke-width="4.2"/><path d="M1716.0 553.0 C1714.7 554.5 1710.2 557.5 1708.0 562.0 C1705.8 566.5 1704.5 574.5 1703.0 580.0 C1701.5 585.5 1698.5 589.7 1699.0 595.0 C1699.5 600.3 1704.0 607.5 1706.0 612.0 C1708.0 616.5 1710.7 617.2 1711.0 622.0 C1711.3 626.8 1708.0 634.7 1708.0 641.0 C1708.0 647.3 1709.3 654.0 1711.0 660.0 C1712.7 666.0 1716.5 670.3 1718.0 677.0 C1719.5 683.7 1719.7 690.2 1720.0 700.0 C1720.3 709.8 1720.0 730.0 1720.0 736.0" stroke="#eec65c" stroke-width="4.2"/><path d="M1602.0 639.0 L1708.0 639.0" stroke="#eec65c" stroke-width="4.2"/><path d="M1605.0 680.0 L1700.0 678.0 L1764.0 675.0" stroke="#eec65c" stroke-width="4.2"/><path d="M1646.0 596.0 L1648.0 650.0 L1650.0 702.0" stroke="#eec65c" stroke-width="4.2"/><path d="M1676.0 596.0 L1676.0 639.0" stroke="#eec65c" stroke-width="4.2"/><path d="M1637.8 702.3 L1680.0 701.5 L1716.8 700.7" stroke="#eec65c" stroke-width="4.2"/><path d="M1577.0 746.5 C1580.8 746.4 1587.1 746.8 1600.0 745.9 C1612.9 745.0 1639.0 742.4 1654.3 741.0 C1669.6 739.6 1681.4 738.7 1692.1 737.7 C1702.8 736.7 1714.0 735.6 1718.4 735.2" stroke="#eec65c" stroke-width="4.2"/><path d="M1623.0 793.6 C1625.5 792.2 1633.1 789.2 1637.8 785.4 C1642.5 781.6 1646.3 774.0 1651.0 770.6 C1655.7 767.2 1657.3 766.2 1665.8 764.8 C1674.3 763.4 1696.0 762.8 1702.0 762.4" stroke="#eec65c" stroke-width="4.2"/><path d="M1602.0 680.0 C1605.0 681.7 1613.7 684.8 1619.7 690.0 C1625.7 695.2 1633.1 705.1 1637.8 711.4 C1642.5 717.7 1644.7 722.3 1647.7 727.8 C1650.7 733.3 1654.2 737.4 1655.9 744.3 C1657.6 751.2 1657.3 764.9 1657.6 769.0" stroke="#eec65c" stroke-width="4.2"/><path d="M1649.3 681.0 L1650.2 702.3" stroke="#eec65c" stroke-width="4.2"/><path d="M1692.1 737.7 C1692.2 741.8 1691.8 755.5 1692.9 762.4 C1694.0 769.2 1697.2 774.7 1698.7 778.8 C1700.2 782.9 1701.5 785.6 1702.0 787.0" stroke="#eec65c" stroke-width="4.2"/><path d="M1702.0 762.4 L1705.3 785.4" stroke="#eec65c" stroke-width="4.2"/><path d="M1670.7 798.6 C1671.8 800.2 1675.9 805.7 1677.3 808.4 C1678.7 811.1 1678.7 813.9 1679.0 815.0" stroke="#eec65c" stroke-width="4.2"/><path d="M1669.0 828.2 L1665.8 841.0" stroke="#eec65c" stroke-width="4.2"/><path d="M1685.5 828.2 L1690.5 841.0" stroke="#eec65c" stroke-width="4.2"/><path d="M926.3 295.4 L933.2 297.2 L933.2 307.6 L935.8 315.4 L939.3 321.4 L941.9 328.3 L944.5 334.4 L948.0 334.4 L948.8 328.3 L953.2 328.3 L954.0 333.5 L958.3 334.4 L956.6 339.6 L954.9 346.0 L955.0 358.0 L962.0 368.0 L975.0 382.0 L984.0 385.0 L992.0 391.0 L1003.0 397.0 L1014.0 404.0 L1020.0 415.0 L1025.0 428.0 L1031.0 442.0 L1036.0 453.0 L1040.0 461.0 L1044.0 465.0 L1050.0 462.0 L1058.0 466.0 L1064.0 462.0 L1073.0 468.0 L1078.0 462.0 L1084.0 457.0 L1086.0 450.0 L1088.0 448.0 L1096.0 440.0 L1102.0 435.0 L1108.0 424.0 L1113.0 413.0 L1122.0 404.0 L1130.0 400.0 L1136.5 393.6 L1134.9 385.5 L1139.0 380.0 L1143.0 374.9 L1147.9 374.9 L1156.0 379.8 L1165.7 379.0 L1169.0 383.8 L1178.7 380.6 L1183.6 387.1 L1192.5 386.3 L1190.1 395.2 L1195.0 393.6 L1191.7 408.2 L1195.0 400.0 L1208.0 405.0 L1214.4 411.5 L1224.2 409.8 L1237.2 416.3 L1246.9 424.4 L1253.4 429.3 L1263.2 422.8 L1271.3 421.2 L1300.0 421.2" stroke="#ecc96c" stroke-width="3.4"/><path d="M1496.0 681.0 L1560.0 681.0 L1610.0 681.0" stroke="#ecc96c" stroke-width="3.4"/><path d="M1383.0 700.0 L1440.0 702.0 L1500.0 700.0" stroke="#ecc96c" stroke-width="3.4"/><path d="M1545.0 638.0 L1545.0 661.0" stroke="#ecc96c" stroke-width="3.4"/><path d="M1477.0 616.0 L1477.0 638.0 L1545.0 638.0" stroke="#ecc96c" stroke-width="3.4"/><path d="M1496.0 681.0 L1496.0 700.0" stroke="#ecc96c" stroke-width="3.4"/><path d="M1250.0 687.0 C1255.0 683.5 1270.3 673.0 1280.0 666.0 C1289.7 659.0 1298.5 649.8 1308.0 645.0 C1317.5 640.2 1332.2 638.3 1337.0 637.0" stroke="#ecc96c" stroke-width="3.4"/><path d="M1262.0 697.0 C1266.7 693.5 1280.3 682.2 1290.0 676.0 C1299.7 669.8 1308.3 664.3 1320.0 660.0 C1331.7 655.7 1346.8 650.3 1360.0 650.0 C1373.2 649.7 1392.5 656.7 1399.0 658.0" stroke="#ecc96c" stroke-width="3.4"/><path d="M1383.0 700.0 C1385.8 701.7 1393.0 707.2 1400.0 710.0 C1407.0 712.8 1420.8 715.8 1425.0 717.0" stroke="#ecc96c" stroke-width="3.4"/><path d="M1344.0 710.0 C1346.7 708.3 1353.5 701.7 1360.0 700.0 C1366.5 698.3 1379.2 700.0 1383.0 700.0" stroke="#ecc96c" stroke-width="3.4"/><path d="M1285.0 538.0 C1284.7 541.7 1282.2 549.7 1283.0 560.0 C1283.8 570.3 1287.2 588.0 1290.0 600.0 C1292.8 612.0 1298.3 626.7 1300.0 632.0" stroke="#ecc96c" stroke-width="3.4"/><path d="M1400.0 574.0 L1400.0 616.0" stroke="#ecc96c" stroke-width="3.4"/><path d="M1360.0 690.0 L1345.0 730.0" stroke="#ecc96c" stroke-width="3.4"/><path d="M1400.0 700.0 L1395.0 740.0" stroke="#ecc96c" stroke-width="3.4"/><path d="M1460.0 658.0 L1455.0 745.0" stroke="#ecc96c" stroke-width="3.4"/><path d="M1500.0 700.0 L1500.0 738.0" stroke="#ecc96c" stroke-width="3.4"/><path d="M1764.0 498.0 C1762.5 498.7 1758.2 499.7 1755.0 502.0 C1751.8 504.3 1748.2 508.8 1745.0 512.0 C1741.8 515.2 1738.7 518.8 1736.0 521.0 C1733.3 523.2 1731.3 522.3 1729.0 525.0 C1726.7 527.7 1724.0 532.2 1722.0 537.0 C1720.0 541.8 1719.8 548.8 1717.0 554.0 C1714.2 559.2 1708.2 563.0 1705.0 568.0 C1701.8 573.0 1699.3 579.3 1698.0 584.0 C1696.7 588.7 1697.2 594.0 1697.0 596.0" stroke="#ecc96c" stroke-width="3.4"/></g>
<g fill="none" stroke-linecap="round" stroke-linejoin="round"><path d="M847.0 488.0 L856.0 505.0 L864.0 522.0" stroke="#fbe6a2" stroke-width="2.0"/><path d="M1320.0 275.0 C1321.2 279.3 1325.5 290.3 1327.0 301.0 C1328.5 311.7 1328.7 332.7 1329.0 339.0" stroke="#fbe6a2" stroke-width="2.0"/><path d="M1243.0 717.0 L1260.0 731.0" stroke="#fbe6a2" stroke-width="2.0"/><path d="M1208.0 757.0 C1208.3 758.7 1207.7 763.3 1210.0 767.0 C1212.3 770.7 1217.8 774.8 1222.0 779.0 C1226.2 783.2 1232.8 789.8 1235.0 792.0" stroke="#fbe6a2" stroke-width="2.0"/><path d="M1405.0 749.0 L1399.0 773.0" stroke="#fbe6a2" stroke-width="2.0"/><path d="M1283.0 832.0 L1312.0 841.0" stroke="#fbe6a2" stroke-width="2.0"/><path d="M1590.0 599.0 C1598.3 598.7 1621.7 597.7 1640.0 597.0 C1658.3 596.3 1690.0 595.3 1700.0 595.0" stroke="#fae4a6" stroke-width="2.6"/><path d="M1704.0 601.0 C1705.0 599.8 1707.0 596.2 1710.0 594.0 C1713.0 591.8 1717.8 589.7 1722.0 588.0 C1726.2 586.3 1732.8 584.7 1735.0 584.0" stroke="#fae4a6" stroke-width="2.6"/><path d="M1716.0 553.0 C1714.7 554.5 1710.2 557.5 1708.0 562.0 C1705.8 566.5 1704.5 574.5 1703.0 580.0 C1701.5 585.5 1698.5 589.7 1699.0 595.0 C1699.5 600.3 1704.0 607.5 1706.0 612.0 C1708.0 616.5 1710.7 617.2 1711.0 622.0 C1711.3 626.8 1708.0 634.7 1708.0 641.0 C1708.0 647.3 1709.3 654.0 1711.0 660.0 C1712.7 666.0 1716.5 670.3 1718.0 677.0 C1719.5 683.7 1719.7 690.2 1720.0 700.0 C1720.3 709.8 1720.0 730.0 1720.0 736.0" stroke="#fae4a6" stroke-width="2.6"/><path d="M1602.0 639.0 L1708.0 639.0" stroke="#fae4a6" stroke-width="2.6"/><path d="M1605.0 680.0 L1700.0 678.0 L1764.0 675.0" stroke="#fae4a6" stroke-width="2.6"/><path d="M1646.0 596.0 L1648.0 650.0 L1650.0 702.0" stroke="#fae4a6" stroke-width="2.6"/><path d="M1676.0 596.0 L1676.0 639.0" stroke="#fae4a6" stroke-width="2.6"/><path d="M1637.8 702.3 L1680.0 701.5 L1716.8 700.7" stroke="#fae4a6" stroke-width="2.6"/><path d="M1577.0 746.5 C1580.8 746.4 1587.1 746.8 1600.0 745.9 C1612.9 745.0 1639.0 742.4 1654.3 741.0 C1669.6 739.6 1681.4 738.7 1692.1 737.7 C1702.8 736.7 1714.0 735.6 1718.4 735.2" stroke="#fae4a6" stroke-width="2.6"/><path d="M1623.0 793.6 C1625.5 792.2 1633.1 789.2 1637.8 785.4 C1642.5 781.6 1646.3 774.0 1651.0 770.6 C1655.7 767.2 1657.3 766.2 1665.8 764.8 C1674.3 763.4 1696.0 762.8 1702.0 762.4" stroke="#fae4a6" stroke-width="2.6"/><path d="M1602.0 680.0 C1605.0 681.7 1613.7 684.8 1619.7 690.0 C1625.7 695.2 1633.1 705.1 1637.8 711.4 C1642.5 717.7 1644.7 722.3 1647.7 727.8 C1650.7 733.3 1654.2 737.4 1655.9 744.3 C1657.6 751.2 1657.3 764.9 1657.6 769.0" stroke="#fae4a6" stroke-width="2.6"/><path d="M1649.3 681.0 L1650.2 702.3" stroke="#fae4a6" stroke-width="2.6"/><path d="M1692.1 737.7 C1692.2 741.8 1691.8 755.5 1692.9 762.4 C1694.0 769.2 1697.2 774.7 1698.7 778.8 C1700.2 782.9 1701.5 785.6 1702.0 787.0" stroke="#fae4a6" stroke-width="2.6"/><path d="M1702.0 762.4 L1705.3 785.4" stroke="#fae4a6" stroke-width="2.6"/><path d="M1670.7 798.6 C1671.8 800.2 1675.9 805.7 1677.3 808.4 C1678.7 811.1 1678.7 813.9 1679.0 815.0" stroke="#fae4a6" stroke-width="2.6"/><path d="M1669.0 828.2 L1665.8 841.0" stroke="#fae4a6" stroke-width="2.6"/><path d="M1685.5 828.2 L1690.5 841.0" stroke="#fae4a6" stroke-width="2.6"/><path d="M926.3 295.4 L933.2 297.2 L933.2 307.6 L935.8 315.4 L939.3 321.4 L941.9 328.3 L944.5 334.4 L948.0 334.4 L948.8 328.3 L953.2 328.3 L954.0 333.5 L958.3 334.4 L956.6 339.6 L954.9 346.0 L955.0 358.0 L962.0 368.0 L975.0 382.0 L984.0 385.0 L992.0 391.0 L1003.0 397.0 L1014.0 404.0 L1020.0 415.0 L1025.0 428.0 L1031.0 442.0 L1036.0 453.0 L1040.0 461.0 L1044.0 465.0 L1050.0 462.0 L1058.0 466.0 L1064.0 462.0 L1073.0 468.0 L1078.0 462.0 L1084.0 457.0 L1086.0 450.0 L1088.0 448.0 L1096.0 440.0 L1102.0 435.0 L1108.0 424.0 L1113.0 413.0 L1122.0 404.0 L1130.0 400.0 L1136.5 393.6 L1134.9 385.5 L1139.0 380.0 L1143.0 374.9 L1147.9 374.9 L1156.0 379.8 L1165.7 379.0 L1169.0 383.8 L1178.7 380.6 L1183.6 387.1 L1192.5 386.3 L1190.1 395.2 L1195.0 393.6 L1191.7 408.2 L1195.0 400.0 L1208.0 405.0 L1214.4 411.5 L1224.2 409.8 L1237.2 416.3 L1246.9 424.4 L1253.4 429.3 L1263.2 422.8 L1271.3 421.2 L1300.0 421.2" stroke="#fbe6a2" stroke-width="2.0"/><path d="M1496.0 681.0 L1560.0 681.0 L1610.0 681.0" stroke="#fbe6a2" stroke-width="2.0"/><path d="M1383.0 700.0 L1440.0 702.0 L1500.0 700.0" stroke="#fbe6a2" stroke-width="2.0"/><path d="M1545.0 638.0 L1545.0 661.0" stroke="#fbe6a2" stroke-width="2.0"/><path d="M1477.0 616.0 L1477.0 638.0 L1545.0 638.0" stroke="#fbe6a2" stroke-width="2.0"/><path d="M1496.0 681.0 L1496.0 700.0" stroke="#fbe6a2" stroke-width="2.0"/><path d="M1250.0 687.0 C1255.0 683.5 1270.3 673.0 1280.0 666.0 C1289.7 659.0 1298.5 649.8 1308.0 645.0 C1317.5 640.2 1332.2 638.3 1337.0 637.0" stroke="#fbe6a2" stroke-width="2.0"/><path d="M1262.0 697.0 C1266.7 693.5 1280.3 682.2 1290.0 676.0 C1299.7 669.8 1308.3 664.3 1320.0 660.0 C1331.7 655.7 1346.8 650.3 1360.0 650.0 C1373.2 649.7 1392.5 656.7 1399.0 658.0" stroke="#fbe6a2" stroke-width="2.0"/><path d="M1383.0 700.0 C1385.8 701.7 1393.0 707.2 1400.0 710.0 C1407.0 712.8 1420.8 715.8 1425.0 717.0" stroke="#fbe6a2" stroke-width="2.0"/><path d="M1344.0 710.0 C1346.7 708.3 1353.5 701.7 1360.0 700.0 C1366.5 698.3 1379.2 700.0 1383.0 700.0" stroke="#fbe6a2" stroke-width="2.0"/><path d="M1285.0 538.0 C1284.7 541.7 1282.2 549.7 1283.0 560.0 C1283.8 570.3 1287.2 588.0 1290.0 600.0 C1292.8 612.0 1298.3 626.7 1300.0 632.0" stroke="#fbe6a2" stroke-width="2.0"/><path d="M1400.0 574.0 L1400.0 616.0" stroke="#fbe6a2" stroke-width="2.0"/><path d="M1360.0 690.0 L1345.0 730.0" stroke="#fbe6a2" stroke-width="2.0"/><path d="M1400.0 700.0 L1395.0 740.0" stroke="#fbe6a2" stroke-width="2.0"/><path d="M1460.0 658.0 L1455.0 745.0" stroke="#fbe6a2" stroke-width="2.0"/><path d="M1500.0 700.0 L1500.0 738.0" stroke="#fbe6a2" stroke-width="2.0"/><path d="M1764.0 498.0 C1762.5 498.7 1758.2 499.7 1755.0 502.0 C1751.8 504.3 1748.2 508.8 1745.0 512.0 C1741.8 515.2 1738.7 518.8 1736.0 521.0 C1733.3 523.2 1731.3 522.3 1729.0 525.0 C1726.7 527.7 1724.0 532.2 1722.0 537.0 C1720.0 541.8 1719.8 548.8 1717.0 554.0 C1714.2 559.2 1708.2 563.0 1705.0 568.0 C1701.8 573.0 1699.3 579.3 1698.0 584.0 C1696.7 588.7 1697.2 594.0 1697.0 596.0" stroke="#fbe6a2" stroke-width="2.0"/></g>
<g fill="none" stroke-linecap="round" stroke-linejoin="round"><path d="M839.0 420.0 L841.6 440.0" stroke="#e8a654" stroke-width="3.6"/><path d="M839.0 345.0 C841.2 344.2 847.5 342.5 852.0 340.0 C856.5 337.5 862.6 332.9 866.0 330.0 C869.4 327.1 870.3 324.7 872.6 322.3 C874.9 319.9 877.6 317.6 879.6 315.4 C881.6 313.2 882.8 310.8 884.8 309.3 C886.8 307.8 889.4 306.6 891.7 306.3 C894.0 306.0 896.0 307.0 898.6 307.6 C901.2 308.2 904.7 310.1 907.3 310.2 C909.9 310.3 911.9 309.7 914.2 308.4 C916.5 307.1 919.5 304.6 921.1 302.4 C922.7 300.2 922.8 297.5 923.7 295.4 C924.6 293.3 924.7 290.4 926.3 289.8 C927.9 289.2 930.6 291.0 933.2 292.0 C935.8 293.0 939.6 295.3 941.9 295.9 C944.2 296.5 946.0 296.3 947.1 295.4 C948.2 294.4 948.1 291.6 948.8 290.2 C949.4 288.8 950.6 287.5 951.0 287.0" stroke="#e8a654" stroke-width="3.6"/><path d="M841.6 440.0 L850.0 457.0 L851.5 482.0 L857.0 497.0 L864.0 513.0 L872.6 533.0 L872.6 558.0 L875.0 585.0 L878.2 609.0 L875.4 623.0 L881.0 634.0 L879.0 645.0 L871.2 659.5 L872.6 676.4 L876.0 683.0 L881.0 687.6 L895.0 686.2 L909.0 690.4 L923.0 689.0 L929.0 691.8 L945.7 689.0 L951.4 684.8 L958.0 683.0 L989.0 683.0" stroke="#e8a654" stroke-width="3.6"/><path d="M989.0 683.0 L990.8 668.0 L1002.0 666.5 L1004.8 679.0 L1010.0 685.0 L1016.0 690.4 L1023.0 701.0 L1024.0 720.0 L1025.0 742.0 L1035.0 752.0 L1044.0 760.0 L1049.0 776.0 L1050.0 784.0 L1059.0 801.0 L1062.0 815.0 L1071.0 832.0 L1074.0 841.0" stroke="#e8a654" stroke-width="3.6"/><path d="M1488.0 383.0 L1491.0 382.3 L1502.0 386.0 L1511.0 388.7 L1520.0 385.0 L1528.0 381.4 L1537.0 376.8 L1548.0 378.6 L1553.6 382.3 L1558.0 379.0 L1562.0 379.6 L1566.0 385.0 L1570.0 389.7 L1580.3 390.6 L1580.3 383.2 L1588.5 379.6 L1597.7 378.6 L1603.0 372.0 L1614.3 368.5 L1625.3 369.4 L1632.7 373.1 L1640.0 379.6 L1652.9 382.3 L1659.4 387.8 L1664.0 387.8 L1678.7 378.6 L1691.5 375.0 L1709.0 371.0 L1721.0 363.9 L1726.5 358.4 L1726.5 351.0 L1733.9 341.8 L1741.2 334.5 L1752.3 329.0 L1764.0 326.0" stroke="#e8a654" stroke-width="3.6"/><path d="M1752.3 329.0 L1750.4 336.4 L1764.0 332.7" stroke="#e8a654" stroke-width="3.6"/><path d="M1272.0 181.0 C1275.8 183.7 1287.2 190.3 1295.0 197.0 C1302.8 203.7 1312.7 212.8 1319.0 221.0 C1325.3 229.2 1330.2 239.8 1333.0 246.0 C1335.8 252.2 1333.2 254.8 1336.0 258.0 C1338.8 261.2 1345.3 261.3 1350.0 265.0 C1354.7 268.7 1360.3 273.3 1364.0 280.0 C1367.7 286.7 1369.2 297.2 1372.0 305.0 C1374.8 312.8 1378.8 321.2 1381.0 327.0 C1383.2 332.8 1384.3 337.8 1385.0 340.0" stroke="#e9aa5a" stroke-width="4.4"/><path d="M1334.0 254.0 C1337.0 253.5 1343.0 251.3 1352.0 251.0 C1361.0 250.7 1380.3 252.5 1388.0 252.0 C1395.7 251.5 1394.8 252.0 1398.0 248.0 C1401.2 244.0 1404.0 233.0 1407.0 228.0 C1410.0 223.0 1411.7 222.0 1416.0 218.0 C1420.3 214.0 1428.3 208.0 1433.0 204.0 C1437.7 200.0 1442.2 195.7 1444.0 194.0" stroke="#e9aa5a" stroke-width="4.4"/><path d="M1397.0 252.0 C1397.2 255.0 1397.3 263.3 1398.0 270.0 C1398.7 276.7 1399.5 285.3 1401.0 292.0 C1402.5 298.7 1404.5 304.7 1407.0 310.0 C1409.5 315.3 1413.2 320.3 1416.0 324.0 C1418.8 327.7 1422.7 330.7 1424.0 332.0" stroke="#e9aa5a" stroke-width="4.4"/><path d="M1435.0 298.0 L1462.0 299.0" stroke="#e8a654" stroke-width="3.6"/><path d="M1260.0 424.0 C1266.7 423.3 1281.5 420.8 1300.0 420.0 C1318.5 419.2 1347.3 419.8 1371.0 419.0 C1394.7 418.2 1430.2 415.7 1442.0 415.0" stroke="#e9aa5a" stroke-width="4.4"/><path d="M1267.0 430.0 C1272.5 431.2 1288.8 433.8 1300.0 437.0 C1311.2 440.2 1324.5 446.0 1334.0 449.0 C1343.5 452.0 1353.2 454.0 1357.0 455.0" stroke="#e9aa5a" stroke-width="4.4"/><path d="M1443.0 375.0 L1484.0 376.0" stroke="#e8a654" stroke-width="3.6"/><path d="M1272.0 362.0 L1300.0 366.0" stroke="#e8a654" stroke-width="3.6"/><path d="M1270.0 711.0 C1268.7 714.2 1265.3 723.3 1262.0 730.0 C1258.7 736.7 1257.0 744.5 1250.0 751.0 C1243.0 757.5 1227.7 763.5 1220.0 769.0 C1212.3 774.5 1209.0 778.3 1204.0 784.0 C1199.0 789.7 1194.5 797.2 1190.0 803.0 C1185.5 808.8 1181.5 812.7 1177.0 819.0 C1172.5 825.3 1165.3 837.3 1163.0 841.0" stroke="#e8a654" stroke-width="3.6"/><path d="M1305.0 763.0 C1303.8 765.8 1300.0 774.5 1298.0 780.0 C1296.0 785.5 1295.2 789.3 1293.0 796.0 C1290.8 802.7 1287.7 812.5 1285.0 820.0 C1282.3 827.5 1278.3 837.5 1277.0 841.0" stroke="#e8a654" stroke-width="3.6"/><path d="M1573.0 696.0 C1573.2 703.7 1572.2 726.8 1574.0 742.0 C1575.8 757.2 1581.0 774.8 1584.0 787.0 C1587.0 799.2 1589.5 806.0 1592.0 815.0 C1594.5 824.0 1597.8 836.7 1599.0 841.0" stroke="#e8a654" stroke-width="3.6"/><path d="M1389.0 361.0 L1391.0 420.0 L1393.0 474.0" stroke="#e8a654" stroke-width="3.6"/><path d="M1718.4 735.5 C1722.0 735.7 1732.4 736.1 1740.0 736.5 C1747.6 736.9 1760.0 737.5 1764.0 737.7" stroke="#e9aa5a" stroke-width="4.4"/><path d="M1520.0 841.0 C1525.5 839.2 1541.3 834.5 1553.0 830.0 C1564.7 825.5 1580.5 818.8 1590.0 814.0 C1599.5 809.2 1604.5 804.4 1610.0 801.0 C1615.5 797.6 1619.7 794.1 1623.0 793.6 C1626.3 793.1 1625.6 797.1 1629.6 797.7 C1633.6 798.3 1641.0 797.4 1647.0 797.0 C1653.0 796.6 1657.2 796.7 1665.8 795.3 C1674.4 793.9 1688.8 790.8 1698.7 788.7 C1708.6 786.6 1719.8 785.7 1725.0 782.9 C1730.2 780.1 1728.9 775.4 1730.0 772.0 C1731.1 768.6 1731.6 765.1 1731.6 762.4 C1731.6 759.7 1731.3 758.7 1730.0 755.8 C1728.7 752.9 1725.9 748.3 1724.0 745.0 C1722.1 741.7 1719.3 737.5 1718.4 736.0" stroke="#e9aa5a" stroke-width="4.4"/><path d="M1600.0 793.6 L1623.0 793.6" stroke="#e8a654" stroke-width="3.6"/><path d="M1269.0 430.0 C1270.2 430.6 1271.3 432.2 1276.0 433.4 C1280.7 434.6 1291.0 435.6 1297.3 437.4 C1303.5 439.1 1309.7 442.3 1313.5 443.9 C1317.3 445.5 1318.9 446.6 1320.0 447.2" stroke="#e9aa5a" stroke-width="4.4"/></g>
<g fill="none" stroke-linecap="round" stroke-linejoin="round"><path d="M839.0 420.0 L841.6 440.0" stroke="#f9cf8f" stroke-width="2.0"/><path d="M839.0 345.0 C841.2 344.2 847.5 342.5 852.0 340.0 C856.5 337.5 862.6 332.9 866.0 330.0 C869.4 327.1 870.3 324.7 872.6 322.3 C874.9 319.9 877.6 317.6 879.6 315.4 C881.6 313.2 882.8 310.8 884.8 309.3 C886.8 307.8 889.4 306.6 891.7 306.3 C894.0 306.0 896.0 307.0 898.6 307.6 C901.2 308.2 904.7 310.1 907.3 310.2 C909.9 310.3 911.9 309.7 914.2 308.4 C916.5 307.1 919.5 304.6 921.1 302.4 C922.7 300.2 922.8 297.5 923.7 295.4 C924.6 293.3 924.7 290.4 926.3 289.8 C927.9 289.2 930.6 291.0 933.2 292.0 C935.8 293.0 939.6 295.3 941.9 295.9 C944.2 296.5 946.0 296.3 947.1 295.4 C948.2 294.4 948.1 291.6 948.8 290.2 C949.4 288.8 950.6 287.5 951.0 287.0" stroke="#f9cf8f" stroke-width="2.0"/><path d="M841.6 440.0 L850.0 457.0 L851.5 482.0 L857.0 497.0 L864.0 513.0 L872.6 533.0 L872.6 558.0 L875.0 585.0 L878.2 609.0 L875.4 623.0 L881.0 634.0 L879.0 645.0 L871.2 659.5 L872.6 676.4 L876.0 683.0 L881.0 687.6 L895.0 686.2 L909.0 690.4 L923.0 689.0 L929.0 691.8 L945.7 689.0 L951.4 684.8 L958.0 683.0 L989.0 683.0" stroke="#f9cf8f" stroke-width="2.0"/><path d="M989.0 683.0 L990.8 668.0 L1002.0 666.5 L1004.8 679.0 L1010.0 685.0 L1016.0 690.4 L1023.0 701.0 L1024.0 720.0 L1025.0 742.0 L1035.0 752.0 L1044.0 760.0 L1049.0 776.0 L1050.0 784.0 L1059.0 801.0 L1062.0 815.0 L1071.0 832.0 L1074.0 841.0" stroke="#f9cf8f" stroke-width="2.0"/><path d="M1488.0 383.0 L1491.0 382.3 L1502.0 386.0 L1511.0 388.7 L1520.0 385.0 L1528.0 381.4 L1537.0 376.8 L1548.0 378.6 L1553.6 382.3 L1558.0 379.0 L1562.0 379.6 L1566.0 385.0 L1570.0 389.7 L1580.3 390.6 L1580.3 383.2 L1588.5 379.6 L1597.7 378.6 L1603.0 372.0 L1614.3 368.5 L1625.3 369.4 L1632.7 373.1 L1640.0 379.6 L1652.9 382.3 L1659.4 387.8 L1664.0 387.8 L1678.7 378.6 L1691.5 375.0 L1709.0 371.0 L1721.0 363.9 L1726.5 358.4 L1726.5 351.0 L1733.9 341.8 L1741.2 334.5 L1752.3 329.0 L1764.0 326.0" stroke="#f9cf8f" stroke-width="2.0"/><path d="M1752.3 329.0 L1750.4 336.4 L1764.0 332.7" stroke="#f9cf8f" stroke-width="2.0"/><path d="M1272.0 181.0 C1275.8 183.7 1287.2 190.3 1295.0 197.0 C1302.8 203.7 1312.7 212.8 1319.0 221.0 C1325.3 229.2 1330.2 239.8 1333.0 246.0 C1335.8 252.2 1333.2 254.8 1336.0 258.0 C1338.8 261.2 1345.3 261.3 1350.0 265.0 C1354.7 268.7 1360.3 273.3 1364.0 280.0 C1367.7 286.7 1369.2 297.2 1372.0 305.0 C1374.8 312.8 1378.8 321.2 1381.0 327.0 C1383.2 332.8 1384.3 337.8 1385.0 340.0" stroke="#f8cc88" stroke-width="2.8"/><path d="M1334.0 254.0 C1337.0 253.5 1343.0 251.3 1352.0 251.0 C1361.0 250.7 1380.3 252.5 1388.0 252.0 C1395.7 251.5 1394.8 252.0 1398.0 248.0 C1401.2 244.0 1404.0 233.0 1407.0 228.0 C1410.0 223.0 1411.7 222.0 1416.0 218.0 C1420.3 214.0 1428.3 208.0 1433.0 204.0 C1437.7 200.0 1442.2 195.7 1444.0 194.0" stroke="#f8cc88" stroke-width="2.8"/><path d="M1397.0 252.0 C1397.2 255.0 1397.3 263.3 1398.0 270.0 C1398.7 276.7 1399.5 285.3 1401.0 292.0 C1402.5 298.7 1404.5 304.7 1407.0 310.0 C1409.5 315.3 1413.2 320.3 1416.0 324.0 C1418.8 327.7 1422.7 330.7 1424.0 332.0" stroke="#f8cc88" stroke-width="2.8"/><path d="M1435.0 298.0 L1462.0 299.0" stroke="#f9cf8f" stroke-width="2.0"/><path d="M1260.0 424.0 C1266.7 423.3 1281.5 420.8 1300.0 420.0 C1318.5 419.2 1347.3 419.8 1371.0 419.0 C1394.7 418.2 1430.2 415.7 1442.0 415.0" stroke="#f8cc88" stroke-width="2.8"/><path d="M1267.0 430.0 C1272.5 431.2 1288.8 433.8 1300.0 437.0 C1311.2 440.2 1324.5 446.0 1334.0 449.0 C1343.5 452.0 1353.2 454.0 1357.0 455.0" stroke="#f8cc88" stroke-width="2.8"/><path d="M1443.0 375.0 L1484.0 376.0" stroke="#f9cf8f" stroke-width="2.0"/><path d="M1272.0 362.0 L1300.0 366.0" stroke="#f9cf8f" stroke-width="2.0"/><path d="M1270.0 711.0 C1268.7 714.2 1265.3 723.3 1262.0 730.0 C1258.7 736.7 1257.0 744.5 1250.0 751.0 C1243.0 757.5 1227.7 763.5 1220.0 769.0 C1212.3 774.5 1209.0 778.3 1204.0 784.0 C1199.0 789.7 1194.5 797.2 1190.0 803.0 C1185.5 808.8 1181.5 812.7 1177.0 819.0 C1172.5 825.3 1165.3 837.3 1163.0 841.0" stroke="#f9cf8f" stroke-width="2.0"/><path d="M1305.0 763.0 C1303.8 765.8 1300.0 774.5 1298.0 780.0 C1296.0 785.5 1295.2 789.3 1293.0 796.0 C1290.8 802.7 1287.7 812.5 1285.0 820.0 C1282.3 827.5 1278.3 837.5 1277.0 841.0" stroke="#f9cf8f" stroke-width="2.0"/><path d="M1573.0 696.0 C1573.2 703.7 1572.2 726.8 1574.0 742.0 C1575.8 757.2 1581.0 774.8 1584.0 787.0 C1587.0 799.2 1589.5 806.0 1592.0 815.0 C1594.5 824.0 1597.8 836.7 1599.0 841.0" stroke="#f9cf8f" stroke-width="2.0"/><path d="M1389.0 361.0 L1391.0 420.0 L1393.0 474.0" stroke="#f9cf8f" stroke-width="2.0"/><path d="M1718.4 735.5 C1722.0 735.7 1732.4 736.1 1740.0 736.5 C1747.6 736.9 1760.0 737.5 1764.0 737.7" stroke="#f8cc88" stroke-width="2.8"/><path d="M1520.0 841.0 C1525.5 839.2 1541.3 834.5 1553.0 830.0 C1564.7 825.5 1580.5 818.8 1590.0 814.0 C1599.5 809.2 1604.5 804.4 1610.0 801.0 C1615.5 797.6 1619.7 794.1 1623.0 793.6 C1626.3 793.1 1625.6 797.1 1629.6 797.7 C1633.6 798.3 1641.0 797.4 1647.0 797.0 C1653.0 796.6 1657.2 796.7 1665.8 795.3 C1674.4 793.9 1688.8 790.8 1698.7 788.7 C1708.6 786.6 1719.8 785.7 1725.0 782.9 C1730.2 780.1 1728.9 775.4 1730.0 772.0 C1731.1 768.6 1731.6 765.1 1731.6 762.4 C1731.6 759.7 1731.3 758.7 1730.0 755.8 C1728.7 752.9 1725.9 748.3 1724.0 745.0 C1722.1 741.7 1719.3 737.5 1718.4 736.0" stroke="#f8cc88" stroke-width="2.8"/><path d="M1600.0 793.6 L1623.0 793.6" stroke="#f9cf8f" stroke-width="2.0"/><path d="M1269.0 430.0 C1270.2 430.6 1271.3 432.2 1276.0 433.4 C1280.7 434.6 1291.0 435.6 1297.3 437.4 C1303.5 439.1 1309.7 442.3 1313.5 443.9 C1317.3 445.5 1318.9 446.6 1320.0 447.2" stroke="#f8cc88" stroke-width="2.8"/></g>
<g fill="none" stroke-linecap="round" stroke-linejoin="round"><path d="M1302.5 442.0 L1301.5 353.0 L1303.0 347.0 L1308.0 344.8 L1314.0 344.5 L1468.0 343.6" stroke="#e4b648" stroke-width="4.8"/><path d="M1302.5 442.0 C1303.2 442.8 1304.6 445.7 1307.0 447.0 C1309.4 448.3 1315.0 447.5 1317.0 450.0 C1319.0 452.5 1319.3 457.7 1319.0 462.0 C1318.7 466.3 1315.7 473.7 1315.0 476.0" stroke="#e4b648" stroke-width="4.8"/><path d="M1467.0 343.0 L1468.0 400.0 L1470.0 466.0" stroke="#e4b648" stroke-width="4.8"/><path d="M1437.0 361.0 L1440.0 400.0 L1442.0 468.0" stroke="#e4b648" stroke-width="4.8"/><path d="M1303.0 366.0 L1370.0 365.0 L1440.0 364.0" stroke="#e6ba50" stroke-width="3.8"/><path d="M1357.0 455.0 L1400.0 455.0 L1468.0 454.0" stroke="#e6ba50" stroke-width="3.8"/><path d="M1444.0 425.0 L1484.0 425.0" stroke="#e6ba50" stroke-width="3.8"/><path d="M1330.0 330.0 L1330.0 427.0 L1333.0 474.0" stroke="#e6ba50" stroke-width="3.8"/><path d="M1331.0 262.0 C1332.2 267.5 1335.2 283.7 1338.0 295.0 C1340.8 306.3 1345.8 323.2 1348.0 330.0 C1350.2 336.8 1348.8 332.7 1351.0 336.0 C1353.2 339.3 1358.4 345.2 1361.0 350.0 C1363.6 354.8 1365.7 360.0 1366.5 365.0 C1367.3 370.0 1366.4 373.7 1365.8 380.0 C1365.2 386.3 1363.5 396.3 1362.7 403.0 C1361.9 409.7 1361.2 414.9 1361.2 420.0 C1361.2 425.1 1361.9 428.0 1362.7 433.5 C1363.5 439.0 1364.2 446.8 1365.8 453.0 C1367.3 459.2 1370.0 464.8 1372.0 471.0 C1374.0 477.2 1377.0 486.8 1378.0 490.0" stroke="#e4b648" stroke-width="4.8"/><path d="M1338.0 260.0 C1339.3 265.0 1342.8 278.7 1346.0 290.0 C1349.2 301.3 1354.7 320.5 1357.0 328.0 C1359.3 335.5 1357.4 331.3 1360.0 335.0 C1362.6 338.7 1369.6 345.0 1372.6 350.0 C1375.6 355.0 1377.4 359.5 1378.0 365.0 C1378.6 370.5 1377.1 376.7 1376.4 383.0 C1375.7 389.3 1374.5 396.8 1374.0 403.0 C1373.5 409.2 1373.5 415.2 1373.3 420.0 C1373.1 424.8 1373.0 430.0 1373.0 432.0" stroke="#e4b648" stroke-width="4.8"/><path d="M1446.0 190.0 C1445.3 195.5 1443.8 213.2 1442.0 223.0 C1440.2 232.8 1436.8 241.2 1435.0 249.0 C1433.2 256.8 1431.3 261.3 1431.0 270.0 C1430.7 278.7 1433.0 293.5 1433.0 301.0 C1433.0 308.5 1432.5 311.8 1431.0 315.0 C1429.5 318.2 1425.3 317.7 1424.0 320.0 C1422.7 322.3 1422.0 326.3 1423.0 329.0 C1424.0 331.7 1427.2 333.5 1430.0 336.0 C1432.8 338.5 1438.3 342.7 1440.0 344.0" stroke="#e4b648" stroke-width="4.8"/><path d="M1416.0 181.0 C1415.7 182.0 1415.5 185.0 1414.0 187.0 C1412.5 189.0 1414.0 191.8 1407.0 193.0 C1400.0 194.2 1384.2 194.2 1372.0 194.0 C1359.8 193.8 1340.8 191.3 1334.0 192.0 C1327.2 192.7 1331.7 194.2 1331.0 198.0 C1330.3 201.8 1329.5 209.3 1330.0 215.0 C1330.5 220.7 1333.5 227.7 1334.0 232.0 C1334.5 236.3 1333.2 239.5 1333.0 241.0" stroke="#e6ba50" stroke-width="3.8"/><path d="M1336.0 181.0 C1339.5 182.5 1351.0 187.8 1357.0 190.0 C1363.0 192.2 1368.0 189.8 1372.0 194.0 C1376.0 198.2 1377.5 206.7 1381.0 215.0 C1384.5 223.3 1390.3 237.8 1393.0 244.0 C1395.7 250.2 1396.3 250.7 1397.0 252.0" stroke="#e6ba50" stroke-width="3.8"/><path d="M1397.0 252.0 C1400.2 252.2 1410.0 252.3 1416.0 253.0 C1422.0 253.7 1430.2 255.5 1433.0 256.0" stroke="#e6ba50" stroke-width="3.8"/><path d="M1341.0 734.0 C1339.5 735.2 1336.8 739.5 1332.0 741.0 C1327.2 742.5 1318.5 743.7 1312.0 743.0 C1305.5 742.3 1297.5 738.0 1293.0 737.0 C1288.5 736.0 1288.2 735.0 1285.0 737.0 C1281.8 739.0 1279.2 743.5 1274.0 749.0 C1268.8 754.5 1259.8 762.8 1254.0 770.0 C1248.2 777.2 1243.8 786.5 1239.0 792.0 C1234.2 797.5 1230.2 800.5 1225.0 803.0 C1219.8 805.5 1213.0 805.0 1208.0 807.0 C1203.0 809.0 1197.2 813.7 1195.0 815.0" stroke="#e4b648" stroke-width="4.8"/><path d="M1245.0 707.0 C1244.0 709.0 1242.3 714.0 1239.0 719.0 C1235.7 724.0 1230.2 731.0 1225.0 737.0 C1219.8 743.0 1213.8 749.0 1208.0 755.0 C1202.2 761.0 1196.2 766.8 1190.0 773.0 C1183.8 779.2 1177.7 786.5 1171.0 792.0 C1164.3 797.5 1156.0 802.5 1150.0 806.0 C1144.0 809.5 1140.2 810.2 1135.0 813.0 C1129.8 815.8 1122.3 818.3 1119.0 823.0 C1115.7 827.7 1115.7 838.0 1115.0 841.0" stroke="#e6ba50" stroke-width="3.8"/><path d="M1338.0 754.0 L1364.0 746.0" stroke="#e6ba50" stroke-width="3.8"/><path d="M1290.0 737.0 C1296.3 737.8 1319.8 743.0 1328.0 742.0 C1336.2 741.0 1337.2 732.8 1339.0 731.0" stroke="#e6ba50" stroke-width="3.8"/><path d="M1441.0 754.0 C1440.3 760.0 1439.5 779.3 1437.0 790.0 C1434.5 800.7 1428.3 809.5 1426.0 818.0 C1423.7 826.5 1423.5 837.2 1423.0 841.0" stroke="#e6ba50" stroke-width="3.8"/><path d="M1285.0 491.0 L1380.0 490.0 L1483.0 491.0" stroke="#e6ba50" stroke-width="3.8"/><path d="M1285.0 538.0 L1380.0 538.0 L1477.0 538.0" stroke="#e6ba50" stroke-width="3.8"/><path d="M1347.0 574.0 L1440.0 574.0 L1522.0 574.0" stroke="#e6ba50" stroke-width="3.8"/><path d="M1405.0 616.0 L1477.0 616.0" stroke="#e6ba50" stroke-width="3.8"/><path d="M1399.0 658.0 L1470.0 658.0 L1548.0 658.0" stroke="#e6ba50" stroke-width="3.8"/><path d="M1313.0 466.0 L1313.0 538.0" stroke="#e6ba50" stroke-width="3.8"/><path d="M1389.0 479.0 L1389.0 540.0" stroke="#e6ba50" stroke-width="3.8"/><path d="M1438.0 466.0 L1438.0 600.0 L1438.0 704.0" stroke="#e6ba50" stroke-width="3.8"/><path d="M1477.0 466.0 L1477.0 541.0" stroke="#e6ba50" stroke-width="3.8"/><path d="M1378.0 490.0 C1377.0 498.3 1374.7 526.0 1372.0 540.0 C1369.3 554.0 1361.3 561.3 1362.0 574.0 C1362.7 586.7 1372.5 604.7 1376.0 616.0 C1379.5 627.3 1381.8 633.3 1383.0 642.0 C1384.2 650.7 1386.2 659.7 1383.0 668.0 C1379.8 676.3 1370.8 684.3 1364.0 692.0 C1357.2 699.7 1346.7 707.0 1342.0 714.0 C1337.3 721.0 1337.0 730.7 1336.0 734.0" stroke="#e6ba50" stroke-width="3.8"/><path d="M1385.0 480.0 C1383.8 490.0 1380.2 524.3 1378.0 540.0 C1375.8 555.7 1370.3 561.3 1372.0 574.0 C1373.7 586.7 1384.2 604.7 1388.0 616.0 C1391.8 627.3 1393.8 633.3 1395.0 642.0 C1396.2 650.7 1398.2 659.0 1395.0 668.0 C1391.8 677.0 1383.0 687.7 1376.0 696.0 C1369.0 704.3 1358.0 711.0 1353.0 718.0 C1348.0 725.0 1347.2 734.7 1346.0 738.0" stroke="#e6ba50" stroke-width="3.8"/></g>
<g fill="none" stroke-linecap="round" stroke-linejoin="round"><path d="M1302.5 442.0 L1301.5 353.0 L1303.0 347.0 L1308.0 344.8 L1314.0 344.5 L1468.0 343.6" stroke="#f7d671" stroke-width="3.2"/><path d="M1302.5 442.0 C1303.2 442.8 1304.6 445.7 1307.0 447.0 C1309.4 448.3 1315.0 447.5 1317.0 450.0 C1319.0 452.5 1319.3 457.7 1319.0 462.0 C1318.7 466.3 1315.7 473.7 1315.0 476.0" stroke="#f7d671" stroke-width="3.2"/><path d="M1467.0 343.0 L1468.0 400.0 L1470.0 466.0" stroke="#f7d671" stroke-width="3.2"/><path d="M1437.0 361.0 L1440.0 400.0 L1442.0 468.0" stroke="#f7d671" stroke-width="3.2"/><path d="M1303.0 366.0 L1370.0 365.0 L1440.0 364.0" stroke="#f8d978" stroke-width="2.4"/><path d="M1357.0 455.0 L1400.0 455.0 L1468.0 454.0" stroke="#f8d978" stroke-width="2.4"/><path d="M1444.0 425.0 L1484.0 425.0" stroke="#f8d978" stroke-width="2.4"/><path d="M1330.0 330.0 L1330.0 427.0 L1333.0 474.0" stroke="#f8d978" stroke-width="2.4"/><path d="M1331.0 262.0 C1332.2 267.5 1335.2 283.7 1338.0 295.0 C1340.8 306.3 1345.8 323.2 1348.0 330.0 C1350.2 336.8 1348.8 332.7 1351.0 336.0 C1353.2 339.3 1358.4 345.2 1361.0 350.0 C1363.6 354.8 1365.7 360.0 1366.5 365.0 C1367.3 370.0 1366.4 373.7 1365.8 380.0 C1365.2 386.3 1363.5 396.3 1362.7 403.0 C1361.9 409.7 1361.2 414.9 1361.2 420.0 C1361.2 425.1 1361.9 428.0 1362.7 433.5 C1363.5 439.0 1364.2 446.8 1365.8 453.0 C1367.3 459.2 1370.0 464.8 1372.0 471.0 C1374.0 477.2 1377.0 486.8 1378.0 490.0" stroke="#f7d671" stroke-width="3.2"/><path d="M1338.0 260.0 C1339.3 265.0 1342.8 278.7 1346.0 290.0 C1349.2 301.3 1354.7 320.5 1357.0 328.0 C1359.3 335.5 1357.4 331.3 1360.0 335.0 C1362.6 338.7 1369.6 345.0 1372.6 350.0 C1375.6 355.0 1377.4 359.5 1378.0 365.0 C1378.6 370.5 1377.1 376.7 1376.4 383.0 C1375.7 389.3 1374.5 396.8 1374.0 403.0 C1373.5 409.2 1373.5 415.2 1373.3 420.0 C1373.1 424.8 1373.0 430.0 1373.0 432.0" stroke="#f7d671" stroke-width="3.2"/><path d="M1446.0 190.0 C1445.3 195.5 1443.8 213.2 1442.0 223.0 C1440.2 232.8 1436.8 241.2 1435.0 249.0 C1433.2 256.8 1431.3 261.3 1431.0 270.0 C1430.7 278.7 1433.0 293.5 1433.0 301.0 C1433.0 308.5 1432.5 311.8 1431.0 315.0 C1429.5 318.2 1425.3 317.7 1424.0 320.0 C1422.7 322.3 1422.0 326.3 1423.0 329.0 C1424.0 331.7 1427.2 333.5 1430.0 336.0 C1432.8 338.5 1438.3 342.7 1440.0 344.0" stroke="#f7d671" stroke-width="3.2"/><path d="M1416.0 181.0 C1415.7 182.0 1415.5 185.0 1414.0 187.0 C1412.5 189.0 1414.0 191.8 1407.0 193.0 C1400.0 194.2 1384.2 194.2 1372.0 194.0 C1359.8 193.8 1340.8 191.3 1334.0 192.0 C1327.2 192.7 1331.7 194.2 1331.0 198.0 C1330.3 201.8 1329.5 209.3 1330.0 215.0 C1330.5 220.7 1333.5 227.7 1334.0 232.0 C1334.5 236.3 1333.2 239.5 1333.0 241.0" stroke="#f8d978" stroke-width="2.4"/><path d="M1336.0 181.0 C1339.5 182.5 1351.0 187.8 1357.0 190.0 C1363.0 192.2 1368.0 189.8 1372.0 194.0 C1376.0 198.2 1377.5 206.7 1381.0 215.0 C1384.5 223.3 1390.3 237.8 1393.0 244.0 C1395.7 250.2 1396.3 250.7 1397.0 252.0" stroke="#f8d978" stroke-width="2.4"/><path d="M1397.0 252.0 C1400.2 252.2 1410.0 252.3 1416.0 253.0 C1422.0 253.7 1430.2 255.5 1433.0 256.0" stroke="#f8d978" stroke-width="2.4"/><path d="M1341.0 734.0 C1339.5 735.2 1336.8 739.5 1332.0 741.0 C1327.2 742.5 1318.5 743.7 1312.0 743.0 C1305.5 742.3 1297.5 738.0 1293.0 737.0 C1288.5 736.0 1288.2 735.0 1285.0 737.0 C1281.8 739.0 1279.2 743.5 1274.0 749.0 C1268.8 754.5 1259.8 762.8 1254.0 770.0 C1248.2 777.2 1243.8 786.5 1239.0 792.0 C1234.2 797.5 1230.2 800.5 1225.0 803.0 C1219.8 805.5 1213.0 805.0 1208.0 807.0 C1203.0 809.0 1197.2 813.7 1195.0 815.0" stroke="#f7d671" stroke-width="3.2"/><path d="M1245.0 707.0 C1244.0 709.0 1242.3 714.0 1239.0 719.0 C1235.7 724.0 1230.2 731.0 1225.0 737.0 C1219.8 743.0 1213.8 749.0 1208.0 755.0 C1202.2 761.0 1196.2 766.8 1190.0 773.0 C1183.8 779.2 1177.7 786.5 1171.0 792.0 C1164.3 797.5 1156.0 802.5 1150.0 806.0 C1144.0 809.5 1140.2 810.2 1135.0 813.0 C1129.8 815.8 1122.3 818.3 1119.0 823.0 C1115.7 827.7 1115.7 838.0 1115.0 841.0" stroke="#f8d978" stroke-width="2.4"/><path d="M1338.0 754.0 L1364.0 746.0" stroke="#f8d978" stroke-width="2.4"/><path d="M1290.0 737.0 C1296.3 737.8 1319.8 743.0 1328.0 742.0 C1336.2 741.0 1337.2 732.8 1339.0 731.0" stroke="#f8d978" stroke-width="2.4"/><path d="M1441.0 754.0 C1440.3 760.0 1439.5 779.3 1437.0 790.0 C1434.5 800.7 1428.3 809.5 1426.0 818.0 C1423.7 826.5 1423.5 837.2 1423.0 841.0" stroke="#f8d978" stroke-width="2.4"/><path d="M1285.0 491.0 L1380.0 490.0 L1483.0 491.0" stroke="#f8d978" stroke-width="2.4"/><path d="M1285.0 538.0 L1380.0 538.0 L1477.0 538.0" stroke="#f8d978" stroke-width="2.4"/><path d="M1347.0 574.0 L1440.0 574.0 L1522.0 574.0" stroke="#f8d978" stroke-width="2.4"/><path d="M1405.0 616.0 L1477.0 616.0" stroke="#f8d978" stroke-width="2.4"/><path d="M1399.0 658.0 L1470.0 658.0 L1548.0 658.0" stroke="#f8d978" stroke-width="2.4"/><path d="M1313.0 466.0 L1313.0 538.0" stroke="#f8d978" stroke-width="2.4"/><path d="M1389.0 479.0 L1389.0 540.0" stroke="#f8d978" stroke-width="2.4"/><path d="M1438.0 466.0 L1438.0 600.0 L1438.0 704.0" stroke="#f8d978" stroke-width="2.4"/><path d="M1477.0 466.0 L1477.0 541.0" stroke="#f8d978" stroke-width="2.4"/><path d="M1378.0 490.0 C1377.0 498.3 1374.7 526.0 1372.0 540.0 C1369.3 554.0 1361.3 561.3 1362.0 574.0 C1362.7 586.7 1372.5 604.7 1376.0 616.0 C1379.5 627.3 1381.8 633.3 1383.0 642.0 C1384.2 650.7 1386.2 659.7 1383.0 668.0 C1379.8 676.3 1370.8 684.3 1364.0 692.0 C1357.2 699.7 1346.7 707.0 1342.0 714.0 C1337.3 721.0 1337.0 730.7 1336.0 734.0" stroke="#f8d978" stroke-width="2.4"/><path d="M1385.0 480.0 C1383.8 490.0 1380.2 524.3 1378.0 540.0 C1375.8 555.7 1370.3 561.3 1372.0 574.0 C1373.7 586.7 1384.2 604.7 1388.0 616.0 C1391.8 627.3 1393.8 633.3 1395.0 642.0 C1396.2 650.7 1398.2 659.0 1395.0 668.0 C1391.8 677.0 1383.0 687.7 1376.0 696.0 C1369.0 704.3 1358.0 711.0 1353.0 718.0 C1348.0 725.0 1347.2 734.7 1346.0 738.0" stroke="#f8d978" stroke-width="2.4"/></g>
<g fill="none" stroke-linecap="round" stroke-linejoin="round"><path d="M951.0 286.0 C955.2 287.2 967.8 291.2 976.0 293.0 C984.2 294.8 989.3 295.2 1000.0 297.0 C1010.7 298.8 1026.7 301.5 1040.0 304.0 C1053.3 306.5 1068.3 309.3 1080.0 312.0 C1091.7 314.7 1099.0 317.0 1110.0 320.0 C1121.0 323.0 1131.3 326.2 1146.0 330.0 C1160.7 333.8 1181.3 339.2 1198.0 343.0 C1214.7 346.8 1233.7 349.8 1246.0 353.0 C1258.3 356.2 1267.7 360.5 1272.0 362.0" stroke="#f0853c" stroke-width="8.0" stroke-dasharray="3.5 2" stroke-linecap="butt"/><path d="M1297.0 179.0 C1294.8 183.5 1288.5 197.5 1284.0 206.0 C1279.5 214.5 1272.3 224.2 1270.0 230.0 C1267.7 235.8 1268.2 236.3 1270.0 241.0 C1271.8 245.7 1278.8 250.8 1281.0 258.0 C1283.2 265.2 1283.5 275.0 1283.0 284.0 C1282.5 293.0 1279.3 302.7 1278.0 312.0 C1276.7 321.3 1275.8 334.2 1275.0 340.0 C1274.2 345.8 1272.8 342.8 1273.0 347.0 C1273.2 351.2 1275.5 358.3 1276.0 365.0 C1276.5 371.7 1276.7 379.3 1276.0 387.0 C1275.3 394.7 1272.3 403.8 1272.0 411.0 C1271.7 418.2 1271.7 423.8 1274.0 430.0 C1276.3 436.2 1282.5 442.7 1286.0 448.0 C1289.5 453.3 1293.7 457.5 1295.0 462.0 C1296.3 466.5 1295.8 470.0 1294.0 475.0 C1292.2 480.0 1286.5 483.7 1284.0 492.0 C1281.5 500.3 1281.5 512.5 1279.0 525.0 C1276.5 537.5 1269.7 554.0 1269.0 567.0 C1268.3 580.0 1272.5 593.8 1275.0 603.0 C1277.5 612.2 1284.5 613.3 1284.0 622.0 C1283.5 630.7 1275.7 645.2 1272.0 655.0 C1268.3 664.8 1264.3 672.3 1262.0 681.0 C1259.7 689.7 1260.0 700.5 1258.0 707.0 C1256.0 713.5 1257.0 714.8 1250.0 720.0 C1243.0 725.2 1225.5 732.2 1216.0 738.0 C1206.5 743.8 1201.7 749.2 1193.0 755.0 C1184.3 760.8 1173.7 767.2 1164.0 773.0 C1154.3 778.8 1143.2 784.8 1135.0 790.0 C1126.8 795.2 1121.2 798.2 1115.0 804.0 C1108.8 809.8 1103.8 818.8 1098.0 825.0 C1092.2 831.2 1083.0 838.3 1080.0 841.0" stroke="#ee8a40" stroke-width="6.8"/><path d="M1451.0 190.0 C1450.2 195.5 1447.8 214.8 1446.5 223.0 C1445.2 231.2 1442.1 232.3 1443.0 239.0 C1443.9 245.7 1449.3 255.5 1452.0 263.0 C1454.7 270.5 1457.0 277.7 1459.0 284.0 C1461.0 290.3 1462.0 294.3 1464.0 301.0 C1466.0 307.7 1468.8 318.0 1471.0 324.0 C1473.2 330.0 1475.5 330.2 1477.0 337.0 C1478.5 343.8 1478.2 357.5 1480.0 365.0 C1481.8 372.5 1486.8 375.2 1488.0 382.0 C1489.2 388.8 1487.7 397.3 1487.0 406.0 C1486.3 414.7 1484.5 424.2 1484.0 434.0 C1483.5 443.8 1484.0 459.8 1484.0 465.0" stroke="#ee8a40" stroke-width="6.8"/><path d="M1484.0 465.0 C1484.5 469.5 1483.3 483.2 1487.0 492.0 C1490.7 500.8 1499.0 508.7 1506.0 518.0 C1513.0 527.3 1524.3 538.7 1529.0 548.0 C1533.7 557.3 1532.5 568.7 1534.0 574.0 C1535.5 579.3 1537.3 579.0 1538.0 580.0" stroke="#ee8a40" stroke-width="6.8"/><path d="M1279.0 616.0 C1282.7 618.7 1292.3 628.5 1301.0 632.0 C1309.7 635.5 1321.2 637.5 1331.0 637.0 C1340.8 636.5 1351.3 632.5 1360.0 629.0 C1368.7 625.5 1376.0 620.3 1383.0 616.0 C1390.0 611.7 1394.0 605.7 1402.0 603.0 C1410.0 600.3 1421.8 601.2 1431.0 600.0 C1440.2 598.8 1447.2 598.5 1457.0 596.0 C1466.8 593.5 1479.2 587.2 1490.0 585.0 C1500.8 582.8 1514.0 584.0 1522.0 583.0 C1530.0 582.0 1529.3 578.7 1538.0 579.0 C1546.7 579.3 1565.8 583.5 1574.0 585.0 C1582.2 586.5 1580.0 587.3 1587.0 588.0 C1594.0 588.7 1604.5 589.7 1616.0 589.0 C1627.5 588.3 1643.2 584.5 1656.0 584.0 C1668.8 583.5 1682.8 585.2 1693.0 586.0 C1703.2 586.8 1709.0 589.5 1717.0 589.0 C1725.0 588.5 1733.2 586.5 1741.0 583.0 C1748.8 579.5 1760.2 570.5 1764.0 568.0" stroke="#ee8a40" stroke-width="6.8"/><path d="M1357.0 736.0 C1361.2 738.0 1374.7 743.5 1382.0 748.0 C1389.3 752.5 1395.0 758.2 1401.0 763.0 C1407.0 767.8 1412.8 771.8 1418.0 777.0 C1423.2 782.2 1428.3 789.3 1432.0 794.0 C1435.7 798.7 1437.2 800.7 1440.0 805.0 C1442.8 809.3 1445.5 814.2 1449.0 820.0 C1452.5 825.8 1459.0 836.7 1461.0 840.0" stroke="#ee8a40" stroke-width="6.8"/><path d="M1766.0 804.0 C1763.7 807.7 1756.0 819.7 1752.0 826.0 C1748.0 832.3 1743.7 839.3 1742.0 842.0" stroke="#ee8a40" stroke-width="4.8"/><path d="M1770.0 476.0 C1768.8 478.3 1764.2 485.2 1763.0 490.0 C1761.8 494.8 1761.8 500.0 1763.0 505.0 C1764.2 510.0 1768.8 517.5 1770.0 520.0" stroke="#ee8a40" stroke-width="6.8"/></g>
<g fill="none" stroke-linecap="round" stroke-linejoin="round"><path d="M951.0 286.0 C955.2 287.2 967.8 291.2 976.0 293.0 C984.2 294.8 989.3 295.2 1000.0 297.0 C1010.7 298.8 1026.7 301.5 1040.0 304.0 C1053.3 306.5 1068.3 309.3 1080.0 312.0 C1091.7 314.7 1099.0 317.0 1110.0 320.0 C1121.0 323.0 1131.3 326.2 1146.0 330.0 C1160.7 333.8 1181.3 339.2 1198.0 343.0 C1214.7 346.8 1233.7 349.8 1246.0 353.0 C1258.3 356.2 1267.7 360.5 1272.0 362.0" stroke="#fb9b5a" stroke-width="6.6"/><path d="M1297.0 179.0 C1294.8 183.5 1288.5 197.5 1284.0 206.0 C1279.5 214.5 1272.3 224.2 1270.0 230.0 C1267.7 235.8 1268.2 236.3 1270.0 241.0 C1271.8 245.7 1278.8 250.8 1281.0 258.0 C1283.2 265.2 1283.5 275.0 1283.0 284.0 C1282.5 293.0 1279.3 302.7 1278.0 312.0 C1276.7 321.3 1275.8 334.2 1275.0 340.0 C1274.2 345.8 1272.8 342.8 1273.0 347.0 C1273.2 351.2 1275.5 358.3 1276.0 365.0 C1276.5 371.7 1276.7 379.3 1276.0 387.0 C1275.3 394.7 1272.3 403.8 1272.0 411.0 C1271.7 418.2 1271.7 423.8 1274.0 430.0 C1276.3 436.2 1282.5 442.7 1286.0 448.0 C1289.5 453.3 1293.7 457.5 1295.0 462.0 C1296.3 466.5 1295.8 470.0 1294.0 475.0 C1292.2 480.0 1286.5 483.7 1284.0 492.0 C1281.5 500.3 1281.5 512.5 1279.0 525.0 C1276.5 537.5 1269.7 554.0 1269.0 567.0 C1268.3 580.0 1272.5 593.8 1275.0 603.0 C1277.5 612.2 1284.5 613.3 1284.0 622.0 C1283.5 630.7 1275.7 645.2 1272.0 655.0 C1268.3 664.8 1264.3 672.3 1262.0 681.0 C1259.7 689.7 1260.0 700.5 1258.0 707.0 C1256.0 713.5 1257.0 714.8 1250.0 720.0 C1243.0 725.2 1225.5 732.2 1216.0 738.0 C1206.5 743.8 1201.7 749.2 1193.0 755.0 C1184.3 760.8 1173.7 767.2 1164.0 773.0 C1154.3 778.8 1143.2 784.8 1135.0 790.0 C1126.8 795.2 1121.2 798.2 1115.0 804.0 C1108.8 809.8 1103.8 818.8 1098.0 825.0 C1092.2 831.2 1083.0 838.3 1080.0 841.0" stroke="#fca15c" stroke-width="5.0"/><path d="M1451.0 190.0 C1450.2 195.5 1447.8 214.8 1446.5 223.0 C1445.2 231.2 1442.1 232.3 1443.0 239.0 C1443.9 245.7 1449.3 255.5 1452.0 263.0 C1454.7 270.5 1457.0 277.7 1459.0 284.0 C1461.0 290.3 1462.0 294.3 1464.0 301.0 C1466.0 307.7 1468.8 318.0 1471.0 324.0 C1473.2 330.0 1475.5 330.2 1477.0 337.0 C1478.5 343.8 1478.2 357.5 1480.0 365.0 C1481.8 372.5 1486.8 375.2 1488.0 382.0 C1489.2 388.8 1487.7 397.3 1487.0 406.0 C1486.3 414.7 1484.5 424.2 1484.0 434.0 C1483.5 443.8 1484.0 459.8 1484.0 465.0" stroke="#fca15c" stroke-width="5.0"/><path d="M1484.0 465.0 C1484.5 469.5 1483.3 483.2 1487.0 492.0 C1490.7 500.8 1499.0 508.7 1506.0 518.0 C1513.0 527.3 1524.3 538.7 1529.0 548.0 C1533.7 557.3 1532.5 568.7 1534.0 574.0 C1535.5 579.3 1537.3 579.0 1538.0 580.0" stroke="#fca15c" stroke-width="5.0"/><path d="M1279.0 616.0 C1282.7 618.7 1292.3 628.5 1301.0 632.0 C1309.7 635.5 1321.2 637.5 1331.0 637.0 C1340.8 636.5 1351.3 632.5 1360.0 629.0 C1368.7 625.5 1376.0 620.3 1383.0 616.0 C1390.0 611.7 1394.0 605.7 1402.0 603.0 C1410.0 600.3 1421.8 601.2 1431.0 600.0 C1440.2 598.8 1447.2 598.5 1457.0 596.0 C1466.8 593.5 1479.2 587.2 1490.0 585.0 C1500.8 582.8 1514.0 584.0 1522.0 583.0 C1530.0 582.0 1529.3 578.7 1538.0 579.0 C1546.7 579.3 1565.8 583.5 1574.0 585.0 C1582.2 586.5 1580.0 587.3 1587.0 588.0 C1594.0 588.7 1604.5 589.7 1616.0 589.0 C1627.5 588.3 1643.2 584.5 1656.0 584.0 C1668.8 583.5 1682.8 585.2 1693.0 586.0 C1703.2 586.8 1709.0 589.5 1717.0 589.0 C1725.0 588.5 1733.2 586.5 1741.0 583.0 C1748.8 579.5 1760.2 570.5 1764.0 568.0" stroke="#fca15c" stroke-width="5.0"/><path d="M1357.0 736.0 C1361.2 738.0 1374.7 743.5 1382.0 748.0 C1389.3 752.5 1395.0 758.2 1401.0 763.0 C1407.0 767.8 1412.8 771.8 1418.0 777.0 C1423.2 782.2 1428.3 789.3 1432.0 794.0 C1435.7 798.7 1437.2 800.7 1440.0 805.0 C1442.8 809.3 1445.5 814.2 1449.0 820.0 C1452.5 825.8 1459.0 836.7 1461.0 840.0" stroke="#fca15c" stroke-width="5.0"/><path d="M1766.0 804.0 C1763.7 807.7 1756.0 819.7 1752.0 826.0 C1748.0 832.3 1743.7 839.3 1742.0 842.0" stroke="#fca15c" stroke-width="3.2"/><path d="M1770.0 476.0 C1768.8 478.3 1764.2 485.2 1763.0 490.0 C1761.8 494.8 1761.8 500.0 1763.0 505.0 C1764.2 510.0 1768.8 517.5 1770.0 520.0" stroke="#fca15c" stroke-width="5.0"/><path d="M1447.0 189.0 C1446.7 191.7 1445.8 199.3 1445.0 205.0 C1444.2 210.7 1443.5 217.5 1442.5 223.0 C1441.5 228.5 1440.2 233.7 1439.0 238.0 C1437.8 242.3 1436.1 247.2 1435.5 249.0" stroke="#e4b648" stroke-width="4.8"/><path d="M1447.0 189.0 C1446.7 191.7 1445.8 199.3 1445.0 205.0 C1444.2 210.7 1443.5 217.5 1442.5 223.0 C1441.5 228.5 1440.2 233.7 1439.0 238.0 C1437.8 242.3 1436.1 247.2 1435.5 249.0" stroke="#f7d671" stroke-width="3.2"/></g>
<g><rect x="1272.6" y="502.0" width="20.0" height="14.0" rx="1.5" fill="#20b094"/><rect x="1272.6" y="502.0" width="20.0" height="2.6" rx="1" fill="#e8383d"/><text x="1282.6" y="513.4" font-size="9" font-weight="bold" fill="#fff" text-anchor="middle">G5</text></g><g transform="translate(1373.0 501.5)"><circle r="9.3" fill="#fcf9f2" opacity="0.7"/><circle r="8.7" fill="#c47d4c"/><path d="M-3.6 -6 H3.6 L4.4 -3.6 L7 -1.2 H-7 L-4.4 -3.6 Z M-5.6 4.9 H5.6 V6.2 H-5.6 Z M-4.8 -0.5 h1.6 v4.8 h-1.6 z M-1.9 -0.5 h1.2 v4.8 h-1.2 z M0.7 -0.5 h1.2 v4.8 h-1.2 z M3.2 -0.5 h1.6 v4.8 h-1.6 z" fill="#fff"/></g><text x="1373.0" y="524.7" font-size="13" fill="#7a4a2c" text-anchor="middle" font-weight="normal" stroke="#fcf9f2" stroke-width="2.2" paint-order="stroke" stroke-linejoin="round">太原市汾河景区</text><g transform="translate(1476.8 542.5)"><circle r="9.3" fill="#fcf9f2" opacity="0.7"/><circle r="8.7" fill="#3b86ea"/><circle cx="0" cy="-1.4" r="1.8" fill="#fff"/><path d="M-1 0 H1 L1.5 2.8 L4.2 4.6 V5.6 H-4.2 V4.6 L-1.5 2.8 Z" fill="#fff"/><path d="M-3.5 -3.6 Q-5.9 -0.4 -3.5 2.8 M3.5 -3.6 Q5.9 -0.4 3.5 2.8" stroke="#fff" stroke-width="1.1" fill="none"/></g><text x="1476.8" y="564.4" font-size="13" fill="#1a5da8" text-anchor="middle" font-weight="normal" stroke="#fcf9f2" stroke-width="2.2" paint-order="stroke" stroke-linejoin="round">太原南站</text><g><rect x="1541.7" y="572.8" width="26.0" height="14.0" rx="1.5" fill="#20b094"/><rect x="1541.7" y="572.8" width="26.0" height="2.6" rx="1" fill="#e8383d"/><text x="1554.7" y="584.2" font-size="9" font-weight="bold" fill="#fff" text-anchor="middle">G20</text></g><g><rect x="1428.0" y="591.6" width="26.0" height="14.0" rx="1.5" fill="#20b094"/><rect x="1428.0" y="591.6" width="26.0" height="2.6" rx="1" fill="#e8383d"/><text x="1441.0" y="603.0" font-size="9" font-weight="bold" fill="#fff" text-anchor="middle">G20</text></g><g transform="translate(1508.6 613.6)"><circle r="9.3" fill="#fcf9f2" opacity="0.7"/><circle r="8.7" fill="#3b86ea"/><path d="M-5.6 0 L-4.6 -0.9 L2.6 -0.9 Q5.4 -0.7 5.8 0 Q5.4 0.7 2.6 0.9 L-4.6 0.9 Z M0.8 -0.6 L-1.6 -5.4 H-0.2 L3 -0.6 Z M0.8 0.6 L-1.6 5.4 H-0.2 L3 0.6 Z M-4.2 -0.6 L-5.4 -2.6 H-4.4 L-2.8 -0.6 Z M-4.2 0.6 L-5.4 2.6 H-4.4 L-2.8 0.6 Z" fill="#fff"/></g><text x="1508.6" y="636.1" font-size="13" fill="#1a5da8" text-anchor="middle" font-weight="normal" stroke="#fcf9f2" stroke-width="2.2" paint-order="stroke" stroke-linejoin="round">太原武宿国际机场</text><rect x="1387.5" y="634.7" width="47.7" height="15.9" fill="#5b9ee9" opacity="0.88"/><text x="1411.3" y="647.5" font-size="13.5" fill="#fff" text-anchor="middle" font-weight="500">小店区</text><g transform="translate(1268.0 624.6)"><circle r="9.3" fill="#fcf9f2" opacity="0.7"/><circle r="8.7" fill="#4db851"/><path d="M0.6 -6.2 L4.4 2.6 H1.4 V4.6 H3.6 V5.6 H-2.6 V4.6 H-0.2 V2.6 H-3.2 Z" fill="#fff"/><path d="M-2.4 -5.4 L-4.6 2" stroke="#fff" stroke-width="0.8" fill="none"/></g><text x="1280.3" y="629.3" font-size="13" fill="#2c882e" text-anchor="start" font-weight="normal" stroke="#fcf9f2" stroke-width="2.2" paint-order="stroke" stroke-linejoin="round">太原植物园</text><rect x="1260.2" y="673.6" width="46.8" height="15.6" fill="#5b9ee9" opacity="0.88"/><text x="1283.6" y="686.2" font-size="13.5" fill="#fff" text-anchor="middle" font-weight="500">晋源区</text><text x="1382.6" y="669.0" font-size="12.5" fill="#4a7fc0" text-anchor="middle" stroke="#fcf9f2" stroke-width="2" paint-order="stroke" transform="rotate(20 1382.6 664.5)">汾</text><text x="1377.7" y="683.7" font-size="12.5" fill="#4a7fc0" text-anchor="middle" stroke="#fcf9f2" stroke-width="2" paint-order="stroke" transform="rotate(25 1377.7 679.2)">河</text><text x="1579.0" y="631.7" font-size="12.5" fill="#666" text-anchor="middle" stroke="#fcf9f2" stroke-width="2" paint-order="stroke" transform="rotate(40 1579.0 627.2)">石</text><text x="1587.0" y="641.5" font-size="12.5" fill="#666" text-anchor="middle" stroke="#fcf9f2" stroke-width="2" paint-order="stroke" transform="rotate(40 1587.0 637.0)">太</text><text x="1595.3" y="651.2" font-size="12.5" fill="#666" text-anchor="middle" stroke="#fcf9f2" stroke-width="2" paint-order="stroke" transform="rotate(40 1595.3 646.7)">线</text><g transform="translate(1238.0 561.7)"><circle r="9.3" fill="#fcf9f2" opacity="0.7"/><circle r="8.7" fill="#c47d4c"/><path d="M-3.6 -6 H3.6 L4.4 -3.6 L7 -1.2 H-7 L-4.4 -3.6 Z M-5.6 4.9 H5.6 V6.2 H-5.6 Z M-4.8 -0.5 h1.6 v4.8 h-1.6 z M-1.9 -0.5 h1.2 v4.8 h-1.2 z M0.7 -0.5 h1.2 v4.8 h-1.2 z M3.2 -0.5 h1.6 v4.8 h-1.6 z" fill="#fff"/></g><text x="1238.0" y="585.0" font-size="13" fill="#7a4a2c" text-anchor="middle" font-weight="normal" stroke="#fcf9f2" stroke-width="2.2" paint-order="stroke" stroke-linejoin="round">蒙山大佛旅游区</text><text x="1371.6" y="436.7" font-size="13" fill="#7a4a2c" text-anchor="middle" stroke="#fcf9f2" stroke-width="2" paint-order="stroke" transform="rotate(-8 1371.6 432.0)">滨</text><text x="1372.5" y="452.4" font-size="13" fill="#7a4a2c" text-anchor="middle" stroke="#fcf9f2" stroke-width="2" paint-order="stroke" transform="rotate(8 1372.5 447.7)">河</text><text x="1377.7" y="467.1" font-size="13" fill="#7a4a2c" text-anchor="middle" stroke="#fcf9f2" stroke-width="2" paint-order="stroke" transform="rotate(15 1377.7 462.4)">东</text><text x="1381.0" y="479.7" font-size="13" fill="#7a4a2c" text-anchor="middle" stroke="#fcf9f2" stroke-width="2" paint-order="stroke" transform="rotate(15 1381.0 475.0)">路</text><g><rect x="959.1" y="282.1" width="26.0" height="14.0" rx="1.5" fill="#20b094"/><rect x="959.1" y="282.1" width="26.0" height="2.6" rx="1" fill="#f2c230"/><text x="972.1" y="293.5" font-size="9" font-weight="bold" fill="#fff" text-anchor="middle">S56</text></g><g><rect x="1166.6" y="331.8" width="26.0" height="14.0" rx="1.5" fill="#20b094"/><rect x="1166.6" y="331.8" width="26.0" height="2.6" rx="1" fill="#f2c230"/><text x="1179.6" y="343.2" font-size="9" font-weight="bold" fill="#fff" text-anchor="middle">S56</text></g><g><rect x="1265.8" y="311.0" width="20.0" height="14.0" rx="1.5" fill="#20b094"/><rect x="1265.8" y="311.0" width="20.0" height="2.6" rx="1" fill="#e8383d"/><text x="1275.8" y="322.4" font-size="9" font-weight="bold" fill="#fff" text-anchor="middle">G5</text></g><g><rect x="1433.0" y="200.8" width="26.0" height="14.0" rx="1.5" fill="#20b094"/><rect x="1433.0" y="200.8" width="26.0" height="2.6" rx="1" fill="#e8383d"/><text x="1446.0" y="212.2" font-size="9" font-weight="bold" fill="#fff" text-anchor="middle">G55</text></g><g><rect x="1463.0" y="348.0" width="26.0" height="14.0" rx="1.5" fill="#20b094"/><rect x="1463.0" y="348.0" width="26.0" height="2.6" rx="1" fill="#e8383d"/><text x="1476.0" y="359.4" font-size="9" font-weight="bold" fill="#fff" text-anchor="middle">G55</text></g><g><rect x="1409.8" y="773.0" width="26.0" height="14.0" rx="1.5" fill="#20b094"/><rect x="1409.8" y="773.0" width="26.0" height="2.6" rx="1" fill="#e8383d"/><text x="1422.8" y="784.4" font-size="9" font-weight="bold" fill="#fff" text-anchor="middle">G55</text></g><g><rect x="1082.3" y="429.6" width="35.0" height="14.0" rx="2" fill="#f8c433"/><text x="1099.8" y="440.1" font-size="9.5" fill="#4a3a10" text-anchor="middle">S104</text></g><g><rect x="1578.7" y="362.9" width="35.0" height="14.0" rx="2.5" fill="#f03341" stroke="#fdf6f0" stroke-width="0.8"/><text x="1596.2" y="373.2" font-size="9" font-weight="bold" fill="#fff" text-anchor="middle">G307</text></g><g><rect x="1691.5" y="365.7" width="35.0" height="14.0" rx="2.5" fill="#f03341" stroke="#fdf6f0" stroke-width="0.8"/><text x="1709.0" y="376.0" font-size="9" font-weight="bold" fill="#fff" text-anchor="middle">G307</text></g><g><rect x="835.9" y="460.6" width="31.0" height="14.0" rx="2.5" fill="#f03341" stroke="#fdf6f0" stroke-width="0.8"/><text x="851.4" y="470.9" font-size="9" font-weight="bold" fill="#fff" text-anchor="middle">G339</text></g><g><rect x="956.4" y="675.0" width="35.0" height="14.0" rx="2.5" fill="#f03341" stroke="#fdf6f0" stroke-width="0.8"/><text x="973.9" y="685.3" font-size="9" font-weight="bold" fill="#fff" text-anchor="middle">G339</text></g><g><rect x="855.1" y="642.9" width="43.4" height="14.0" rx="1.5" fill="#20b094"/><rect x="855.1" y="642.9" width="43.4" height="2.6" rx="1" fill="#f2c230"/><text x="876.8" y="654.3" font-size="9" font-weight="bold" fill="#fff" text-anchor="middle">S2002</text></g><g><rect x="1097.5" y="808.0" width="35.0" height="14.0" rx="2.5" fill="#f03341" stroke="#fdf6f0" stroke-width="0.8"/><text x="1115.0" y="818.3" font-size="9" font-weight="bold" fill="#fff" text-anchor="middle">G307</text></g><g><rect x="1301.5" y="748.8" width="35.0" height="14.0" rx="2.5" fill="#f03341" stroke="#fdf6f0" stroke-width="0.8"/><text x="1319.0" y="759.1" font-size="9" font-weight="bold" fill="#fff" text-anchor="middle">G208</text></g><g><rect x="1570.5" y="796.9" width="35.0" height="14.0" rx="2.5" fill="#f03341" stroke="#fdf6f0" stroke-width="0.8"/><text x="1588.0" y="807.2" font-size="9" font-weight="bold" fill="#fff" text-anchor="middle">G108</text></g><rect x="1265.2" y="259.0" width="59.8" height="16.5" fill="#5b9ee9" opacity="0.88"/><text x="1295.1" y="272.1" font-size="13.5" fill="#fff" text-anchor="middle" font-weight="500">尖草坪区</text><rect x="1388.0" y="344.7" width="59.8" height="16.1" fill="#5b9ee9" opacity="0.88"/><text x="1417.9" y="357.6" font-size="13.5" fill="#fff" text-anchor="middle" font-weight="500">杏花岭区</text><rect x="1308.0" y="407.4" width="60.2" height="16.1" fill="#5b9ee9" opacity="0.88"/><text x="1338.1" y="420.2" font-size="13.5" fill="#fff" text-anchor="middle" font-weight="500">万柏林区</text><rect x="1385.0" y="401.0" width="46.9" height="16.4" fill="#5b9ee9" opacity="0.88"/><text x="1408.5" y="414.0" font-size="13.5" fill="#fff" text-anchor="middle" font-weight="500">迎泽区</text><rect x="1595.7" y="704.8" width="46.3" height="15.8" fill="#5b9ee9" opacity="0.88"/><text x="1618.8" y="717.5" font-size="13.5" fill="#fff" text-anchor="middle" font-weight="500">榆次区</text><rect x="832.5" y="319.0" width="33.4" height="16.7" fill="#5b9ee9" opacity="0.88"/><text x="849.2" y="332.2" font-size="13.5" fill="#fff" text-anchor="middle" font-weight="500">交市</text><text x="1093.0" y="188.9" font-size="13" fill="#7a4a2c" text-anchor="middle" font-weight="normal" stroke="#fcf9f2" stroke-width="2.2" paint-order="stroke" stroke-linejoin="round">家水利风景区</text><g transform="translate(1144.2 180.6)"><circle r="9.3" fill="#fcf9f2" opacity="0.7"/><circle r="8.7" fill="#c47d4c"/><path d="M-3.6 -6 H3.6 L4.4 -3.6 L7 -1.2 H-7 L-4.4 -3.6 Z M-5.6 4.9 H5.6 V6.2 H-5.6 Z M-4.8 -0.5 h1.6 v4.8 h-1.6 z M-1.9 -0.5 h1.2 v4.8 h-1.2 z M0.7 -0.5 h1.2 v4.8 h-1.2 z M3.2 -0.5 h1.6 v4.8 h-1.6 z" fill="#fff"/></g><g transform="translate(1215.0 194.0)"><circle r="9.3" fill="#fcf9f2" opacity="0.7"/><circle r="8.7" fill="#c47d4c"/><path d="M-3.6 -6 H3.6 L4.4 -3.6 L7 -1.2 H-7 L-4.4 -3.6 Z M-5.6 4.9 H5.6 V6.2 H-5.6 Z M-4.8 -0.5 h1.6 v4.8 h-1.6 z M-1.9 -0.5 h1.2 v4.8 h-1.2 z M0.7 -0.5 h1.2 v4.8 h-1.2 z M3.2 -0.5 h1.6 v4.8 h-1.6 z" fill="#fff"/></g><text x="1215.0" y="217.0" font-size="13" fill="#7a4a2c" text-anchor="middle" font-weight="normal" stroke="#fcf9f2" stroke-width="2.2" paint-order="stroke" stroke-linejoin="round">太原崛围山</text><text x="1215.0" y="232.5" font-size="13" fill="#7a4a2c" text-anchor="middle" font-weight="normal" stroke="#fcf9f2" stroke-width="2.2" paint-order="stroke" stroke-linejoin="round">登山健身步道</text><g transform="translate(1247.0 345.2)"><circle r="9.3" fill="#fcf9f2" opacity="0.7"/><circle r="8.7" fill="#4db851"/><path d="M0.6 -6.2 L4.4 2.6 H1.4 V4.6 H3.6 V5.6 H-2.6 V4.6 H-0.2 V2.6 H-3.2 Z" fill="#fff"/><path d="M-2.4 -5.4 L-4.6 2" stroke="#fff" stroke-width="0.8" fill="none"/></g><text x="1247.0" y="367.2" font-size="13" fill="#2c882e" text-anchor="middle" font-weight="normal" stroke="#fcf9f2" stroke-width="2.2" paint-order="stroke" stroke-linejoin="round">玉泉山城</text><text x="1247.0" y="383.4" font-size="13" fill="#2c882e" text-anchor="middle" font-weight="normal" stroke="#fcf9f2" stroke-width="2.2" paint-order="stroke" stroke-linejoin="round">郊森林公园</text><g transform="translate(1082.1 474.8)"><circle r="9.3" fill="#fcf9f2" opacity="0.7"/><circle r="8.7" fill="#c47d4c"/><path d="M-3.6 -6 H3.6 L4.4 -3.6 L7 -1.2 H-7 L-4.4 -3.6 Z M-5.6 4.9 H5.6 V6.2 H-5.6 Z M-4.8 -0.5 h1.6 v4.8 h-1.6 z M-1.9 -0.5 h1.2 v4.8 h-1.2 z M0.7 -0.5 h1.2 v4.8 h-1.2 z M3.2 -0.5 h1.6 v4.8 h-1.6 z" fill="#fff"/></g><text x="1082.0" y="497.5" font-size="13" fill="#7a4a2c" text-anchor="middle" font-weight="normal" stroke="#fcf9f2" stroke-width="2.2" paint-order="stroke" stroke-linejoin="round">太原杜儿坪桃花沟</text><text x="1688.8" y="304.5" font-size="13" fill="#5e8a3c" text-anchor="middle" font-weight="normal" stroke="#fcf9f2" stroke-width="2.2" paint-order="stroke" stroke-linejoin="round">龙城森林公园</text><g transform="translate(1597.7 470.2)"><circle r="9.3" fill="#fcf9f2" opacity="0.7"/><circle r="8.7" fill="#c47d4c"/><path d="M-3.6 -6 H3.6 L4.4 -3.6 L7 -1.2 H-7 L-4.4 -3.6 Z M-5.6 4.9 H5.6 V6.2 H-5.6 Z M-4.8 -0.5 h1.6 v4.8 h-1.6 z M-1.9 -0.5 h1.2 v4.8 h-1.2 z M0.7 -0.5 h1.2 v4.8 h-1.2 z M3.2 -0.5 h1.6 v4.8 h-1.6 z" fill="#fff"/></g><text x="1597.7" y="492.8" font-size="13" fill="#7a4a2c" text-anchor="middle" font-weight="normal" stroke="#fcf9f2" stroke-width="2.2" paint-order="stroke" stroke-linejoin="round">小西沟文</text><text x="1597.7" y="508.4" font-size="13" fill="#7a4a2c" text-anchor="middle" font-weight="normal" stroke="#fcf9f2" stroke-width="2.2" paint-order="stroke" stroke-linejoin="round">旅康养小镇</text><g transform="translate(1726.0 452.6)"><circle r="9.3" fill="#fcf9f2" opacity="0.7"/><circle r="8.7" fill="#4db851"/><path d="M0.6 -6.2 L4.4 2.6 H1.4 V4.6 H3.6 V5.6 H-2.6 V4.6 H-0.2 V2.6 H-3.2 Z" fill="#fff"/><path d="M-2.4 -5.4 L-4.6 2" stroke="#fff" stroke-width="0.8" fill="none"/></g><text x="1726.0" y="475.7" font-size="13" fill="#2c882e" text-anchor="middle" font-weight="normal" stroke="#fcf9f2" stroke-width="2.2" paint-order="stroke" stroke-linejoin="round">乌金山国</text><text x="1726.0" y="491.0" font-size="13" fill="#2c882e" text-anchor="middle" font-weight="normal" stroke="#fcf9f2" stroke-width="2.2" paint-order="stroke" stroke-linejoin="round">家森林公园</text><text x="1441.0" y="189.3" font-size="11" fill="#5a5a5a" text-anchor="middle" font-weight="normal" stroke="#fcf9f2" stroke-width="2.2" paint-order="stroke" stroke-linejoin="round">阳曲镇</text><text x="1634.2" y="594.6" font-size="11" fill="#5a5a5a" text-anchor="middle" font-weight="normal" stroke="#fcf9f2" stroke-width="2.2" paint-order="stroke" stroke-linejoin="round">乌金山镇</text><g transform="translate(1637.9 634.8)"><circle r="9.3" fill="#fcf9f2" opacity="0.7"/><circle r="8.7" fill="#3d9cec"/><path d="M-6.4 -1.8 L0 -4.8 L6.4 -1.8 L0 1.2 Z M-3.6 0.4 V3.6 Q0 5.8 3.6 3.6 V0.4 L0 2.2 Z M5.6 -1.2 h0.8 v4 h-0.8 z" fill="#fff"/></g><text x="1638.3" y="657.5" font-size="13" fill="#3a3a3a" text-anchor="middle" font-weight="normal" stroke="#fcf9f2" stroke-width="2.2" paint-order="stroke" stroke-linejoin="round">晋中学院</text><text x="1683.0" y="738.8" font-size="15" fill="#333" text-anchor="middle" font-weight="500" stroke="#fcf9f2" stroke-width="2.2" paint-order="stroke" stroke-linejoin="round">晋中</text><text x="1582.0" y="772.4" font-size="11" fill="#5a5a5a" text-anchor="middle" font-weight="normal" stroke="#fcf9f2" stroke-width="2.2" paint-order="stroke" stroke-linejoin="round">张庆乡</text><g transform="translate(1687.0 803.0)"><circle r="9.3" fill="#fcf9f2" opacity="0.7"/><circle r="8.7" fill="#ec5a8a"/><circle r="5" fill="none" stroke="#fff" stroke-width="1.5" stroke-dasharray="1.9 1.24" /><circle r="3.6" fill="none" stroke="#fff" stroke-width="1"/><circle r="1.1" fill="#fff"/><path d="M-0.8 0.6 L-2.4 5.8 H2.4 L0.8 0.6 Z" fill="#fff"/></g><text x="1687.4" y="825.4" font-size="13" fill="#3a3a3a" text-anchor="middle" font-weight="normal" stroke="#fcf9f2" stroke-width="2.2" paint-order="stroke" stroke-linejoin="round">海盗传奇水世界</text><g transform="translate(1523.0 735.2)"><circle r="9.3" fill="#fcf9f2" opacity="0.7"/><circle r="8.7" fill="#3b86ea"/><circle cx="0" cy="-1.4" r="1.8" fill="#fff"/><path d="M-1 0 H1 L1.5 2.8 L4.2 4.6 V5.6 H-4.2 V4.6 L-1.5 2.8 Z" fill="#fff"/><path d="M-3.5 -3.6 Q-5.9 -0.4 -3.5 2.8 M3.5 -3.6 Q5.9 -0.4 3.5 2.8" stroke="#fff" stroke-width="1.1" fill="none"/></g><text x="1523.4" y="757.1" font-size="13" fill="#1a5da8" text-anchor="middle" font-weight="normal" stroke="#fcf9f2" stroke-width="2.2" paint-order="stroke" stroke-linejoin="round">晋中站</text><text x="1155.6" y="804.6" font-size="11" fill="#5a5a5a" text-anchor="middle" font-weight="normal" stroke="#fcf9f2" stroke-width="2.2" paint-order="stroke" stroke-linejoin="round">姚村镇</text><text x="1288.5" y="811.4" font-size="11" fill="#5a5a5a" text-anchor="middle" font-weight="normal" stroke="#fcf9f2" stroke-width="2.2" paint-order="stroke" stroke-linejoin="round">刘家堡乡</text><text x="1303.6" y="811.5" font-size="13" fill="#666" text-anchor="middle" font-weight="normal" stroke="#fcf9f2" stroke-width="2.2" paint-order="stroke" stroke-linejoin="round"></text><text x="869.8" y="576.4" font-size="13" fill="#7a4a2c" text-anchor="middle" stroke="#fcf9f2" stroke-width="2" paint-order="stroke" transform="rotate(0 869.8 571.7)">太</text><text x="871.2" y="589.6" font-size="13" fill="#7a4a2c" text-anchor="middle" stroke="#fcf9f2" stroke-width="2" paint-order="stroke" transform="rotate(0 871.2 584.9)">古</text><text x="873.4" y="603.1" font-size="13" fill="#7a4a2c" text-anchor="middle" stroke="#fcf9f2" stroke-width="2" paint-order="stroke" transform="rotate(0 873.4 598.4)">路</text><text x="1073.7" y="312.2" font-size="12.5" fill="#7a4a2c" text-anchor="middle" stroke="#fcf9f2" stroke-width="2" paint-order="stroke" transform="rotate(15 1073.7 307.7)">太</text><text x="1085.5" y="316.0" font-size="12.5" fill="#7a4a2c" text-anchor="middle" stroke="#fcf9f2" stroke-width="2" paint-order="stroke" transform="rotate(16 1085.5 311.5)">原</text><text x="1099.2" y="320.4" font-size="12.5" fill="#7a4a2c" text-anchor="middle" stroke="#fcf9f2" stroke-width="2" paint-order="stroke" transform="rotate(17 1099.2 315.9)">西</text><text x="1112.5" y="325.1" font-size="12.5" fill="#7a4a2c" text-anchor="middle" stroke="#fcf9f2" stroke-width="2" paint-order="stroke" transform="rotate(17 1112.5 320.6)">山</text><text x="1125.8" y="328.9" font-size="12.5" fill="#7a4a2c" text-anchor="middle" stroke="#fcf9f2" stroke-width="2" paint-order="stroke" transform="rotate(17 1125.8 324.4)">隧</text><text x="1139.0" y="332.8" font-size="12.5" fill="#7a4a2c" text-anchor="middle" stroke="#fcf9f2" stroke-width="2" paint-order="stroke" transform="rotate(17 1139.0 328.3)">道</text><text x="1344.8" y="292.0" font-size="13" fill="#7a4a2c" text-anchor="middle" stroke="#fcf9f2" stroke-width="2" paint-order="stroke" transform="rotate(-18 1344.8 287.3)">滨</text><text x="1348.5" y="305.9" font-size="13" fill="#7a4a2c" text-anchor="middle" stroke="#fcf9f2" stroke-width="2" paint-order="stroke" transform="rotate(-16 1348.5 301.2)">河</text><text x="1352.8" y="319.7" font-size="13" fill="#7a4a2c" text-anchor="middle" stroke="#fcf9f2" stroke-width="2" paint-order="stroke" transform="rotate(-14 1352.8 315.0)">东</text><text x="1358.7" y="332.7" font-size="13" fill="#7a4a2c" text-anchor="middle" stroke="#fcf9f2" stroke-width="2" paint-order="stroke" transform="rotate(-12 1358.7 328.0)">路</text><text x="1190.0" y="826.5" font-size="12.5" fill="#7a4a2c" text-anchor="middle" stroke="#fcf9f2" stroke-width="2" paint-order="stroke" transform="rotate(-48 1190.0 822.0)">游</text><text x="1181.0" y="836.5" font-size="12.5" fill="#7a4a2c" text-anchor="middle" stroke="#fcf9f2" stroke-width="2" paint-order="stroke" transform="rotate(-48 1181.0 832.0)">河</text><text x="1172.0" y="846.5" font-size="12.5" fill="#7a4a2c" text-anchor="middle" stroke="#fcf9f2" stroke-width="2" paint-order="stroke" transform="rotate(-48 1172.0 842.0)">汾</text><text x="1442.7" y="811.5" font-size="12.5" fill="#7a4a2c" text-anchor="middle" stroke="#fcf9f2" stroke-width="2" paint-order="stroke" transform="rotate(55 1442.7 807.0)">二</text><text x="1449.8" y="825.5" font-size="12.5" fill="#7a4a2c" text-anchor="middle" stroke="#fcf9f2" stroke-width="2" paint-order="stroke" transform="rotate(55 1449.8 821.0)">仁</text><text x="1459.5" y="837.0" font-size="12.5" fill="#7a4a2c" text-anchor="middle" stroke="#fcf9f2" stroke-width="2" paint-order="stroke" transform="rotate(55 1459.5 832.5)">惠</text><text x="1760.0" y="814.5" font-size="12.5" fill="#7a4a2c" text-anchor="middle" stroke="#fcf9f2" stroke-width="2" paint-order="stroke" transform="rotate(-60 1760.0 810.0)">东</text><text x="1745.5" y="837.0" font-size="12.5" fill="#7a4a2c" text-anchor="middle" stroke="#fcf9f2" stroke-width="2" paint-order="stroke" transform="rotate(-60 1745.5 832.5)">环</text><text x="1733.0" y="857.5" font-size="12.5" fill="#7a4a2c" text-anchor="middle" stroke="#fcf9f2" stroke-width="2" paint-order="stroke" transform="rotate(-60 1733.0 853.0)">高</text><path d="M1269.6 477.9 L1486.5 464.9 L1556.3 527.5 L1613.2 670 L1523 730.5 L1423.2 753.8 L1243 699 Z" fill="#79a9ed" fill-opacity="0.86" stroke="#4a8af0" stroke-width="2.8" stroke-linejoin="round"/><text x="887.5" y="799.6" font-size="12.5" fill="#4b5a75" text-anchor="middle">5 公里</text><path d="M843.5 812.4 V817.6 M843.5 815 H927.7 M927.7 812.4 V817.6" stroke="#222" stroke-width="1.6" fill="none"/><g><path d="M845.5 828.5 L858.8 821.5 L855 836 L852.2 830.8 Z" fill="#1d7ff2"/><path d="M845.5 822 h6 v5 z" fill="#9fe0a0" opacity="0.8"/><path d="M853 834 l6 0 l0 -4 z" fill="#7fd3f7" opacity="0.8"/></g><text x="864" y="833.6" font-size="13.4" font-weight="bold" fill="#222" textLength="53.5" lengthAdjust="spacingAndGlyphs">高德地图</text><text x="925" y="843.4" font-size="12" fill="#555">© 2022 AutoNavi - GS(2021)6375号</text><defs><linearGradient id="pg" x1="0" y1="0" x2="0" y2="1"><stop offset="0" stop-color="#ffffff"/><stop offset="0.6" stop-color="#fdfdfd"/><stop offset="1" stop-color="#ededed"/></linearGradient></defs><g><circle cx="875.6" cy="216.8" r="22.4" fill="#000" opacity="0.07"/><circle cx="875.6" cy="216.3" r="21.7" fill="url(#pg)" stroke="#b4b4b4" stroke-width="1"/><path d="M871.4 206.3 L876 201.7 L880.5 206.3 M871.4 226.5 L876 231.1 L880.5 226.5 M865.6 212.4 L860.9 216.8 L865.6 221.3 M885.5 212.4 L890.4 216.8 L885.5 221.3" fill="none" stroke="#dadada" stroke-width="1.9"/></g><rect x="867.4" y="243.2" width="17.3" height="17.3" rx="2.8" fill="#f6f6f6" stroke="#a8a8a8" stroke-width="1"/><circle cx="875.9" cy="252" r="2.9" fill="#a2a2a2"/><rect x="873.2" y="357" width="5" height="72.5" fill="#fbfbfb" stroke="#b5b5b5" stroke-width="1"/><rect x="872.8" y="281" width="6.2" height="65" fill="#1b9fd6"/><rect x="868.4" y="268.6" width="15.2" height="12.8" rx="2.4" fill="#fdfdfd" stroke="#a4a4a4" stroke-width="1"/><path d="M872.1 275 h7.6 M875.9 271.2 v7.6" stroke="#555" stroke-width="1.7"/><rect x="868.4" y="345.4" width="15.2" height="11.2" rx="2.4" fill="#fdfdfd" stroke="#2f7f9e" stroke-width="1.1"/><path d="M872.3 351 h7.6" stroke="#1b9fd6" stroke-width="2"/><rect x="868.5" y="429.2" width="15" height="13.6" rx="2" fill="#fdfdfd" stroke="#b8b8b8" stroke-width="1"/><path d="M872 436 h8" stroke="#555" stroke-width="1.8"/>
</svg>
<!--/MAPSVG-->
  </div>
</div>
<div class="btn" style="left:496px;top:882px;width:70px;height:36px;line-height:36px;font-size:14px;border-radius:3px">提交</div>

<div class="t" style="left:1571px;top:837px;height:30px;line-height:30px;font-size:21px;font-weight:300;color:#b2b2b2;z-index:9">激活 Windows</div>
<div class="abs" style="left:1655px;top:866px;width:110px;height:10px;overflow:hidden;z-index:9"><div class="t" style="left:0;top:-2px;height:30px;line-height:30px;font-size:20px;font-weight:300;color:#c8c8c8">激活 Windows</div></div>
</body>
</html>
